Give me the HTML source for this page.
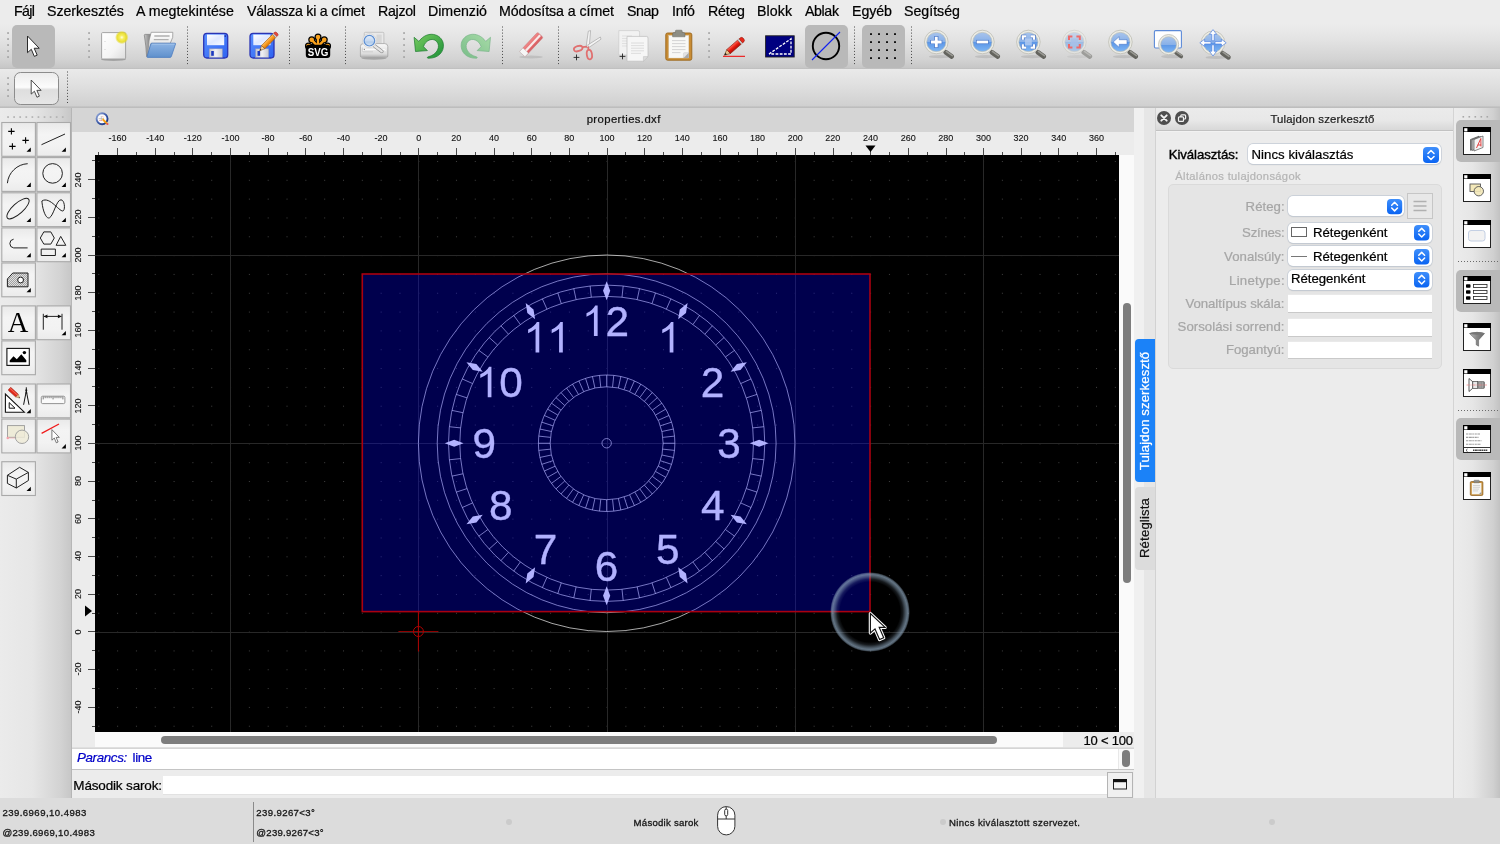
<!DOCTYPE html>
<html lang="hu"><head><meta charset="utf-8"><title>QCAD - properties.dxf</title>
<style>
html,body{margin:0;padding:0;background:#ececec;}
body{width:1500px;height:844px;overflow:hidden;font-family:"Liberation Sans",sans-serif;}
#app{will-change:transform;position:relative;width:1500px;height:844px;overflow:hidden;background:#ececec;}
.t{position:absolute;white-space:pre;font-family:"Liberation Sans",sans-serif;-webkit-text-stroke:0.22px currentColor;}
</style></head><body><div id="app">
<div style="position:absolute;left:0px;top:0px;width:1500px;height:24px;background:#ececec"></div><span class="t" style="left:14.00px;top:1.00px;font-size:14.2px;line-height:20px;color:#000;font-family:'Liberation Sans',sans-serif;letter-spacing:-0.627px;">Fájl</span><span class="t" style="left:47.00px;top:1.00px;font-size:14.2px;line-height:20px;color:#000;font-family:'Liberation Sans',sans-serif;letter-spacing:-0.034px;">Szerkesztés</span><span class="t" style="left:136.00px;top:1.00px;font-size:14.2px;line-height:20px;color:#000;font-family:'Liberation Sans',sans-serif;letter-spacing:0.070px;">A megtekintése</span><span class="t" style="left:247.00px;top:1.00px;font-size:14.2px;line-height:20px;color:#000;font-family:'Liberation Sans',sans-serif;letter-spacing:-0.240px;">Válassza ki a címet</span><span class="t" style="left:378.00px;top:1.00px;font-size:14.2px;line-height:20px;color:#000;font-family:'Liberation Sans',sans-serif;letter-spacing:-0.292px;">Rajzol</span><span class="t" style="left:428.00px;top:1.00px;font-size:14.2px;line-height:20px;color:#000;font-family:'Liberation Sans',sans-serif;letter-spacing:-0.027px;">Dimenzió</span><span class="t" style="left:499.00px;top:1.00px;font-size:14.2px;line-height:20px;color:#000;font-family:'Liberation Sans',sans-serif;letter-spacing:-0.063px;">Módosítsa a címet</span><span class="t" style="left:627.00px;top:1.00px;font-size:14.2px;line-height:20px;color:#000;font-family:'Liberation Sans',sans-serif;letter-spacing:-0.388px;">Snap</span><span class="t" style="left:672.00px;top:1.00px;font-size:14.2px;line-height:20px;color:#000;font-family:'Liberation Sans',sans-serif;letter-spacing:-0.228px;">Infó</span><span class="t" style="left:708.00px;top:1.00px;font-size:14.2px;line-height:20px;color:#000;font-family:'Liberation Sans',sans-serif;letter-spacing:-0.223px;">Réteg</span><span class="t" style="left:757.00px;top:1.00px;font-size:14.2px;line-height:20px;color:#000;font-family:'Liberation Sans',sans-serif;letter-spacing:0.069px;">Blokk</span><span class="t" style="left:805.00px;top:1.00px;font-size:14.2px;line-height:20px;color:#000;font-family:'Liberation Sans',sans-serif;letter-spacing:-0.380px;">Ablak</span><span class="t" style="left:852.00px;top:1.00px;font-size:14.2px;line-height:20px;color:#000;font-family:'Liberation Sans',sans-serif;letter-spacing:-0.066px;">Egyéb</span><span class="t" style="left:904.00px;top:1.00px;font-size:14.2px;line-height:20px;color:#000;font-family:'Liberation Sans',sans-serif;letter-spacing:-0.007px;">Segítség</span>
<div style="position:absolute;left:0px;top:24px;width:1500px;height:45px;background:linear-gradient(#ececec 0%,#e3e3e3 35%,#d3d3d3 78%,#c7c7c7 97%,#bdbdbd 100%)"></div><div style="position:absolute;left:0px;top:69px;width:1500px;height:38px;background:linear-gradient(#eaeaea 0%,#dfdfdf 45%,#cfcfcf 100%)"></div><div style="position:absolute;left:0px;top:106px;width:1500px;height:2px;background:linear-gradient(#c8c8c8,#b9b9b9)"></div><div style="position:absolute;left:12px;top:25px;width:43px;height:43px;background:#b9b9b9;border-radius:5px"></div><div style="position:absolute;left:805px;top:25px;width:43px;height:43px;background:#b9b9b9;border-radius:5px"></div><div style="position:absolute;left:862px;top:25px;width:43px;height:43px;background:#b9b9b9;border-radius:5px"></div><div style="position:absolute;left:14.2px;top:72px;width:44.6px;height:33px;background:linear-gradient(#ececec 0%,#fcfcfc 46%,#dedede 54%,#e6e6e6 100%);border:1.8px solid #8c8c8c;border-radius:6.5px;box-sizing:border-box"></div>
<div style="position:absolute;left:0px;top:108px;width:72px;height:690px;background:linear-gradient(90deg,#ebebeb 0%,#e6e6e6 45%,#d2d2d2 85%,#c6c6c6 100%)"></div><div style="position:absolute;left:70.8px;top:108px;width:1.4px;height:690px;background:#b6b6b6"></div>
<div style="position:absolute;left:72px;top:108px;width:1062px;height:24px;background:#d5d5d5"></div><span class="t" style="left:586.70px;top:111.00px;font-size:11.3px;line-height:16px;color:#111;font-family:'Liberation Sans',sans-serif;letter-spacing:0.395px;">properties.dxf</span><svg style="position:absolute;left:94px;top:111px;overflow:visible;" width="16" height="16" viewBox="0 0 16 16"><defs><linearGradient id="qr" x1="0" y1="0" x2="1" y2="1"><stop offset="0" stop-color="#9cb0dc"/><stop offset="0.5" stop-color="#3c5aa8"/><stop offset="1" stop-color="#16307c"/></linearGradient></defs><circle cx="8.05" cy="7.7" r="5.5" fill="#fafafa" stroke="url(#qr)" stroke-width="1.9"/><path d="M4.6 7.6H10M7.3 5V10" stroke="#a8a8a8" stroke-width="0.6"/><path d="M5 9.4H8M8.6 5.2L9.2 6.4" stroke="#f08080" stroke-width="0.6"/><path d="M8.4 8L13 12.6" stroke="#f8a010" stroke-width="1.9" stroke-linecap="butt"/><path d="M8 7.6L9.2 8L8.4 8.8Z" fill="#f4e0b0"/><circle cx="13.4" cy="13" r="1.1" fill="#e85050"/></svg><div style="position:absolute;left:1119px;top:155px;width:15px;height:577px;background:#fafafa"></div><div style="position:absolute;left:95px;top:732px;width:968px;height:15px;background:#fafafa"></div><div style="position:absolute;left:72px;top:732px;width:23px;height:15px;background:#ececec"></div><div style="position:absolute;left:1063px;top:732px;width:71px;height:15px;background:#ececec"></div><div style="position:absolute;left:1123px;top:303px;width:8px;height:280px;background:#7d7d7d;border-radius:4px"></div><div style="position:absolute;left:161px;top:736px;width:836px;height:8px;background:#7d7d7d;border-radius:4px"></div><span class="t" style="left:1083.50px;top:731.00px;font-size:13px;line-height:19px;color:#000;font-family:'Liberation Sans',sans-serif;letter-spacing:-0.209px;">10 &lt; 100</span><div style="position:absolute;left:72px;top:746.5px;width:1062px;height:3px;background:linear-gradient(#e4e4e4,#c6c6c6)"></div><div style="position:absolute;left:72px;top:749px;width:1062px;height:20px;background:#fff"></div><div style="position:absolute;left:1118px;top:749px;width:16px;height:20px;background:#fafafa;border-left:1px solid #e8e8e8;box-sizing:border-box"></div><div style="position:absolute;left:1122px;top:750px;width:8px;height:17px;background:#7d7d7d;border-radius:4px"></div><div style="position:absolute;left:72px;top:769px;width:1062px;height:1px;background:#c4c4c4"></div><div style="position:absolute;left:72px;top:770px;width:1062px;height:28px;background:#ececec"></div><span class="t" style="left:77.00px;top:748.00px;font-size:13.4px;line-height:19px;color:#0000c8;font-family:'Liberation Sans',sans-serif;letter-spacing:-0.383px;font-style:italic;">Parancs:</span><span class="t" style="left:132.60px;top:748.00px;font-size:13.4px;line-height:19px;color:#0000c8;font-family:'Liberation Sans',sans-serif;letter-spacing:-0.386px;">line</span><span class="t" style="left:73.30px;top:776.00px;font-size:13.5px;line-height:19px;color:#000;font-family:'Liberation Sans',sans-serif;letter-spacing:-0.160px;">Második sarok:</span><div style="position:absolute;left:163px;top:776px;width:945px;height:18px;background:#fff"></div><div style="position:absolute;left:163px;top:794px;width:945px;height:1px;background:#e2e2e2"></div><div style="position:absolute;left:1107px;top:772px;width:26px;height:26px;background:#f0f0f0;border:1px solid #b4b4b4;box-sizing:border-box"></div><svg style="position:absolute;left:1113px;top:779px;overflow:visible;" width="14" height="11" viewBox="0 0 14 11"><rect x="0.5" y="0.5" width="13" height="9.5" fill="#f4f4f4" stroke="#222" stroke-width="1"/><rect x="0" y="0" width="14" height="3.2" fill="#111"/></svg>
<div style="position:absolute;left:1134px;top:108px;width:10px;height:690px;background:#f0f0f0"></div><div style="position:absolute;left:1144px;top:108px;width:11px;height:690px;background:#e6e6e6"></div><div style="position:absolute;left:1155px;top:108px;width:1px;height:690px;background:#d2d2d2"></div><div style="position:absolute;left:1156px;top:108px;width:297px;height:690px;background:#ececec"></div><div style="position:absolute;left:1453px;top:108px;width:1px;height:690px;background:#d4d4d4"></div><div style="position:absolute;left:1454px;top:108px;width:46px;height:690px;background:linear-gradient(90deg,#ececec 0%,#e6e6e6 40%,#d0d0d0 85%,#c2c2c2 100%)"></div>
<div style="position:absolute;left:72px;top:132px;width:1062px;height:23px;background:#ececec"></div><div style="position:absolute;left:72px;top:155px;width:23px;height:577px;background:#ececec"></div><svg style="position:absolute;left:0px;top:0px;overflow:visible;" width="1500" height="844" viewBox="0 0 1500 844"><path d="M98.5 152V155M117.5 148V155M136.5 152V155M155.5 148V155M174.5 152V155M192.5 148V155M211.5 152V155M230.5 148V155M249.5 152V155M268.5 148V155M287.5 152V155M305.5 148V155M324.5 152V155M343.5 148V155M362.5 152V155M381.5 148V155M400.5 152V155M418.5 148V155M437.5 152V155M456.5 148V155M475.5 152V155M494.5 148V155M513.5 152V155M531.5 148V155M550.5 152V155M569.5 148V155M588.5 152V155M607.5 148V155M625.5 152V155M644.5 148V155M663.5 152V155M682.5 148V155M701.5 152V155M720.5 148V155M738.5 152V155M757.5 148V155M776.5 152V155M795.5 148V155M814.5 152V155M833.5 148V155M851.5 152V155M870.5 148V155M889.5 152V155M908.5 148V155M927.5 152V155M946.5 148V155M964.5 152V155M983.5 148V155M1002.5 152V155M1021.5 148V155M1040.5 152V155M1058.5 148V155M1077.5 152V155M1096.5 148V155M1115.5 152V155M92 726.5H95M88 707.5H95M92 688.5H95M88 669.5H95M92 650.5H95M88 631.5H95M92 613.5H95M88 594.5H95M92 575.5H95M88 556.5H95M92 537.5H95M88 518.5H95M92 500.5H95M88 481.5H95M92 462.5H95M88 443.5H95M92 424.5H95M88 405.5H95M92 386.5H95M88 368.5H95M92 349.5H95M88 330.5H95M92 311.5H95M88 292.5H95M92 273.5H95M88 255.5H95M92 236.5H95M88 217.5H95M92 198.5H95M88 179.5H95M92 160.5H95" stroke="#4a4a4a" stroke-width="1" fill="none"/><path d="M865.5 145.5L875.5 145.5L870.5 152Z" fill="#000"/><path d="M85 605.5L85 616.5L92 611Z" fill="#000"/></svg><span class="t" style="left:108.49px;top:131.00px;font-size:9.0px;line-height:14px;color:#111;font-family:'Liberation Sans',sans-serif;letter-spacing:0.000px;-webkit-text-stroke:0.1px #111;">-160</span><span class="t" style="left:146.14px;top:131.00px;font-size:9.0px;line-height:14px;color:#111;font-family:'Liberation Sans',sans-serif;letter-spacing:0.000px;-webkit-text-stroke:0.1px #111;">-140</span><span class="t" style="left:183.79px;top:131.00px;font-size:9.0px;line-height:14px;color:#111;font-family:'Liberation Sans',sans-serif;letter-spacing:0.000px;-webkit-text-stroke:0.1px #111;">-120</span><span class="t" style="left:221.44px;top:131.00px;font-size:9.0px;line-height:14px;color:#111;font-family:'Liberation Sans',sans-serif;letter-spacing:0.000px;-webkit-text-stroke:0.1px #111;">-100</span><span class="t" style="left:261.60px;top:131.00px;font-size:9.0px;line-height:14px;color:#111;font-family:'Liberation Sans',sans-serif;letter-spacing:0.000px;-webkit-text-stroke:0.1px #111;">-80</span><span class="t" style="left:299.25px;top:131.00px;font-size:9.0px;line-height:14px;color:#111;font-family:'Liberation Sans',sans-serif;letter-spacing:0.000px;-webkit-text-stroke:0.1px #111;">-60</span><span class="t" style="left:336.90px;top:131.00px;font-size:9.0px;line-height:14px;color:#111;font-family:'Liberation Sans',sans-serif;letter-spacing:0.000px;-webkit-text-stroke:0.1px #111;">-40</span><span class="t" style="left:374.55px;top:131.00px;font-size:9.0px;line-height:14px;color:#111;font-family:'Liberation Sans',sans-serif;letter-spacing:0.000px;-webkit-text-stroke:0.1px #111;">-20</span><span class="t" style="left:416.20px;top:131.00px;font-size:9.0px;line-height:14px;color:#111;font-family:'Liberation Sans',sans-serif;-webkit-text-stroke:0.1px #111;">0</span><span class="t" style="left:451.34px;top:131.00px;font-size:9.0px;line-height:14px;color:#111;font-family:'Liberation Sans',sans-serif;letter-spacing:0.000px;-webkit-text-stroke:0.1px #111;">20</span><span class="t" style="left:488.99px;top:131.00px;font-size:9.0px;line-height:14px;color:#111;font-family:'Liberation Sans',sans-serif;letter-spacing:0.000px;-webkit-text-stroke:0.1px #111;">40</span><span class="t" style="left:526.64px;top:131.00px;font-size:9.0px;line-height:14px;color:#111;font-family:'Liberation Sans',sans-serif;letter-spacing:0.000px;-webkit-text-stroke:0.1px #111;">60</span><span class="t" style="left:564.29px;top:131.00px;font-size:9.0px;line-height:14px;color:#111;font-family:'Liberation Sans',sans-serif;letter-spacing:0.000px;-webkit-text-stroke:0.1px #111;">80</span><span class="t" style="left:599.44px;top:131.00px;font-size:9.0px;line-height:14px;color:#111;font-family:'Liberation Sans',sans-serif;letter-spacing:0.000px;-webkit-text-stroke:0.1px #111;">100</span><span class="t" style="left:637.09px;top:131.00px;font-size:9.0px;line-height:14px;color:#111;font-family:'Liberation Sans',sans-serif;letter-spacing:0.000px;-webkit-text-stroke:0.1px #111;">120</span><span class="t" style="left:674.74px;top:131.00px;font-size:9.0px;line-height:14px;color:#111;font-family:'Liberation Sans',sans-serif;letter-spacing:0.000px;-webkit-text-stroke:0.1px #111;">140</span><span class="t" style="left:712.39px;top:131.00px;font-size:9.0px;line-height:14px;color:#111;font-family:'Liberation Sans',sans-serif;letter-spacing:0.000px;-webkit-text-stroke:0.1px #111;">160</span><span class="t" style="left:750.04px;top:131.00px;font-size:9.0px;line-height:14px;color:#111;font-family:'Liberation Sans',sans-serif;letter-spacing:0.000px;-webkit-text-stroke:0.1px #111;">180</span><span class="t" style="left:787.69px;top:131.00px;font-size:9.0px;line-height:14px;color:#111;font-family:'Liberation Sans',sans-serif;letter-spacing:0.000px;-webkit-text-stroke:0.1px #111;">200</span><span class="t" style="left:825.34px;top:131.00px;font-size:9.0px;line-height:14px;color:#111;font-family:'Liberation Sans',sans-serif;letter-spacing:0.000px;-webkit-text-stroke:0.1px #111;">220</span><span class="t" style="left:862.99px;top:131.00px;font-size:9.0px;line-height:14px;color:#111;font-family:'Liberation Sans',sans-serif;letter-spacing:0.000px;-webkit-text-stroke:0.1px #111;">240</span><span class="t" style="left:900.64px;top:131.00px;font-size:9.0px;line-height:14px;color:#111;font-family:'Liberation Sans',sans-serif;letter-spacing:0.000px;-webkit-text-stroke:0.1px #111;">260</span><span class="t" style="left:938.29px;top:131.00px;font-size:9.0px;line-height:14px;color:#111;font-family:'Liberation Sans',sans-serif;letter-spacing:0.000px;-webkit-text-stroke:0.1px #111;">280</span><span class="t" style="left:975.94px;top:131.00px;font-size:9.0px;line-height:14px;color:#111;font-family:'Liberation Sans',sans-serif;letter-spacing:0.000px;-webkit-text-stroke:0.1px #111;">300</span><span class="t" style="left:1013.59px;top:131.00px;font-size:9.0px;line-height:14px;color:#111;font-family:'Liberation Sans',sans-serif;letter-spacing:0.000px;-webkit-text-stroke:0.1px #111;">320</span><span class="t" style="left:1051.24px;top:131.00px;font-size:9.0px;line-height:14px;color:#111;font-family:'Liberation Sans',sans-serif;letter-spacing:0.000px;-webkit-text-stroke:0.1px #111;">340</span><span class="t" style="left:1088.89px;top:131.00px;font-size:9.0px;line-height:14px;color:#111;font-family:'Liberation Sans',sans-serif;letter-spacing:0.000px;-webkit-text-stroke:0.1px #111;">360</span><span class="t" style="left:73.4px;top:706.80px;font-size:9.0px;line-height:10px;color:#111;-webkit-text-stroke:0.1px #111;transform-origin:0 0;transform:translate(0px,6.50px) rotate(-90deg);">-40</span><span class="t" style="left:73.4px;top:669.15px;font-size:9.0px;line-height:10px;color:#111;-webkit-text-stroke:0.1px #111;transform-origin:0 0;transform:translate(0px,6.50px) rotate(-90deg);">-20</span><span class="t" style="left:73.4px;top:631.50px;font-size:9.0px;line-height:10px;color:#111;-webkit-text-stroke:0.1px #111;transform-origin:0 0;transform:translate(0px,2.50px) rotate(-90deg);">0</span><span class="t" style="left:73.4px;top:593.85px;font-size:9.0px;line-height:10px;color:#111;-webkit-text-stroke:0.1px #111;transform-origin:0 0;transform:translate(0px,5.01px) rotate(-90deg);">20</span><span class="t" style="left:73.4px;top:556.20px;font-size:9.0px;line-height:10px;color:#111;-webkit-text-stroke:0.1px #111;transform-origin:0 0;transform:translate(0px,5.01px) rotate(-90deg);">40</span><span class="t" style="left:73.4px;top:518.55px;font-size:9.0px;line-height:10px;color:#111;-webkit-text-stroke:0.1px #111;transform-origin:0 0;transform:translate(0px,5.01px) rotate(-90deg);">60</span><span class="t" style="left:73.4px;top:480.90px;font-size:9.0px;line-height:10px;color:#111;-webkit-text-stroke:0.1px #111;transform-origin:0 0;transform:translate(0px,5.01px) rotate(-90deg);">80</span><span class="t" style="left:73.4px;top:443.25px;font-size:9.0px;line-height:10px;color:#111;-webkit-text-stroke:0.1px #111;transform-origin:0 0;transform:translate(0px,7.51px) rotate(-90deg);">100</span><span class="t" style="left:73.4px;top:405.60px;font-size:9.0px;line-height:10px;color:#111;-webkit-text-stroke:0.1px #111;transform-origin:0 0;transform:translate(0px,7.51px) rotate(-90deg);">120</span><span class="t" style="left:73.4px;top:367.95px;font-size:9.0px;line-height:10px;color:#111;-webkit-text-stroke:0.1px #111;transform-origin:0 0;transform:translate(0px,7.51px) rotate(-90deg);">140</span><span class="t" style="left:73.4px;top:330.30px;font-size:9.0px;line-height:10px;color:#111;-webkit-text-stroke:0.1px #111;transform-origin:0 0;transform:translate(0px,7.51px) rotate(-90deg);">160</span><span class="t" style="left:73.4px;top:292.65px;font-size:9.0px;line-height:10px;color:#111;-webkit-text-stroke:0.1px #111;transform-origin:0 0;transform:translate(0px,7.51px) rotate(-90deg);">180</span><span class="t" style="left:73.4px;top:255.00px;font-size:9.0px;line-height:10px;color:#111;-webkit-text-stroke:0.1px #111;transform-origin:0 0;transform:translate(0px,7.51px) rotate(-90deg);">200</span><span class="t" style="left:73.4px;top:217.35px;font-size:9.0px;line-height:10px;color:#111;-webkit-text-stroke:0.1px #111;transform-origin:0 0;transform:translate(0px,7.51px) rotate(-90deg);">220</span><span class="t" style="left:73.4px;top:179.70px;font-size:9.0px;line-height:10px;color:#111;-webkit-text-stroke:0.1px #111;transform-origin:0 0;transform:translate(0px,7.51px) rotate(-90deg);">240</span>
<svg style="position:absolute;left:0;top:0" width="1500" height="844" viewBox="0 0 1500 844"><rect x="95" y="155" width="1024" height="577" fill="#000"/><defs><pattern id="gd" x="418.300" y="631.600" width="18.8250" height="18.8250" patternUnits="userSpaceOnUse"><rect x="0" y="0" width="1" height="1" fill="#404040"/></pattern><clipPath id="cclip"><rect x="95" y="155" width="1024" height="577"/></clipPath><radialGradient id="ring" cx="50%" cy="50%" r="50%"><stop offset="0.75" stop-color="#8aa2b8" stop-opacity="0"/><stop offset="0.82" stop-color="#8aa2b8" stop-opacity="0.16"/><stop offset="0.885" stop-color="#8aa2b8" stop-opacity="0.5"/><stop offset="0.935" stop-color="#8ea6bc" stop-opacity="0.7"/><stop offset="0.965" stop-color="#8ea6bc" stop-opacity="0.55"/><stop offset="0.99" stop-color="#8aa2b8" stop-opacity="0.15"/><stop offset="1" stop-color="#8aa2b8" stop-opacity="0"/></radialGradient></defs><g clip-path="url(#cclip)"><rect x="95" y="155" width="1024" height="577" fill="url(#gd)"/><line x1="230.5" y1="155" x2="230.5" y2="732" stroke="#282828" stroke-width="1"/><line x1="418.5" y1="155" x2="418.5" y2="732" stroke="#282828" stroke-width="1"/><line x1="607.5" y1="155" x2="607.5" y2="732" stroke="#282828" stroke-width="1"/><line x1="795.5" y1="155" x2="795.5" y2="732" stroke="#282828" stroke-width="1"/><line x1="983.5" y1="155" x2="983.5" y2="732" stroke="#282828" stroke-width="1"/><line x1="95" y1="632.5" x2="1119" y2="632.5" stroke="#282828" stroke-width="1"/><line x1="95" y1="443.5" x2="1119" y2="443.5" stroke="#282828" stroke-width="1"/><line x1="95" y1="255.5" x2="1119" y2="255.5" stroke="#282828" stroke-width="1"/><g fill="none" stroke="#fff" stroke-opacity="0.74" stroke-width="0.9"><circle cx="606.65" cy="443.25" r="188.25"/><circle cx="606.65" cy="443.25" r="169.43"/><circle cx="606.65" cy="443.25" r="158.13"/><circle cx="606.65" cy="443.25" r="146.84"/><circle cx="606.65" cy="443.25" r="68.24"/><circle cx="606.65" cy="443.25" r="56.48"/><circle cx="606.65" cy="443.25" r="4.71"/><path d="M606.65 386.77L606.65 375.01M622.00 297.22L623.18 285.99M612.55 387.08L613.78 375.38M637.18 299.62L639.53 288.58M618.39 388.01L620.84 376.50M652.02 303.60L655.51 292.86M624.10 389.54L627.74 378.35M666.37 309.11L670.97 298.79M629.62 391.66L634.41 380.91M634.89 394.34L640.77 384.15M692.96 324.46L699.60 315.32M639.85 397.56L646.76 388.04M704.90 334.13L712.46 325.74M644.44 401.28L652.31 392.54M715.77 345.00L724.16 337.44M648.62 405.46L657.36 397.59M725.44 356.94L734.58 350.30M652.34 410.05L661.86 403.14M655.56 415.01L665.75 409.13M740.79 383.53L751.11 378.93M658.24 420.28L668.99 415.49M746.30 397.88L757.04 394.39M660.36 425.80L671.55 422.16M750.28 412.72L761.32 410.37M661.89 431.51L673.40 429.06M752.68 427.90L763.91 426.72M662.82 437.35L674.52 436.12M663.12 443.25L674.89 443.25M752.68 458.60L763.91 459.78M662.82 449.15L674.52 450.38M750.28 473.78L761.32 476.13M661.89 454.99L673.40 457.44M746.30 488.62L757.04 492.11M660.36 460.70L671.55 464.34M740.79 502.97L751.11 507.57M658.24 466.22L668.99 471.01M655.56 471.49L665.75 477.37M725.44 529.56L734.58 536.20M652.34 476.45L661.86 483.36M715.77 541.50L724.16 549.06M648.62 481.04L657.36 488.91M704.90 552.37L712.46 560.76M644.44 485.22L652.31 493.96M692.96 562.04L699.60 571.18M639.85 488.94L646.76 498.46M634.89 492.16L640.77 502.35M666.37 577.39L670.97 587.71M629.62 494.84L634.41 505.59M652.02 582.90L655.51 593.64M624.10 496.96L627.74 508.15M637.18 586.88L639.53 597.92M618.39 498.49L620.84 510.00M622.00 589.28L623.18 600.51M612.55 499.42L613.78 511.12M606.65 499.73L606.65 511.49M591.30 589.28L590.12 600.51M600.75 499.42L599.52 511.12M576.12 586.88L573.77 597.92M594.91 498.49L592.46 510.00M561.28 582.90L557.79 593.64M589.20 496.96L585.56 508.15M546.93 577.39L542.33 587.71M583.68 494.84L578.89 505.59M578.41 492.16L572.53 502.35M520.34 562.04L513.70 571.18M573.45 488.94L566.54 498.46M508.40 552.37L500.84 560.76M568.86 485.22L560.99 493.96M497.53 541.50L489.14 549.06M564.68 481.04L555.94 488.91M487.86 529.56L478.72 536.20M560.96 476.45L551.44 483.36M557.74 471.49L547.55 477.37M472.51 502.97L462.19 507.57M555.06 466.22L544.31 471.01M467.00 488.62L456.26 492.11M552.94 460.70L541.75 464.34M463.02 473.78L451.98 476.13M551.41 454.99L539.90 457.44M460.62 458.60L449.39 459.78M550.48 449.15L538.78 450.38M550.17 443.25L538.41 443.25M460.62 427.90L449.39 426.72M550.48 437.35L538.78 436.12M463.02 412.72L451.98 410.37M551.41 431.51L539.90 429.06M467.00 397.88L456.26 394.39M552.94 425.80L541.75 422.16M472.51 383.53L462.19 378.93M555.06 420.28L544.31 415.49M557.74 415.01L547.55 409.13M487.86 356.94L478.72 350.30M560.96 410.05L551.44 403.14M497.53 345.00L489.14 337.44M564.68 405.46L555.94 397.59M508.40 334.13L500.84 325.74M568.86 401.28L560.99 392.54M520.34 324.46L513.70 315.32M573.45 397.56L566.54 388.04M578.41 394.34L572.53 384.15M546.93 309.11L542.33 298.79M583.68 391.66L578.89 380.91M561.28 303.60L557.79 292.86M589.20 389.54L585.56 378.35M576.12 299.62L573.77 288.58M594.91 388.01L592.46 376.50M591.30 297.22L590.12 285.99M600.75 387.08L599.52 375.38"/></g><g fill="#fff"><path transform="rotate(0 606.65 443.25)" d="M606.65 281.36L610.23 290.77L606.65 300.18L603.07 290.77Z"/><path transform="rotate(30 606.65 443.25)" d="M606.65 281.36L610.23 290.77L606.65 300.18L603.07 290.77Z"/><path transform="rotate(60 606.65 443.25)" d="M606.65 281.36L610.23 290.77L606.65 300.18L603.07 290.77Z"/><path transform="rotate(90 606.65 443.25)" d="M606.65 281.36L610.23 290.77L606.65 300.18L603.07 290.77Z"/><path transform="rotate(120 606.65 443.25)" d="M606.65 281.36L610.23 290.77L606.65 300.18L603.07 290.77Z"/><path transform="rotate(150 606.65 443.25)" d="M606.65 281.36L610.23 290.77L606.65 300.18L603.07 290.77Z"/><path transform="rotate(180 606.65 443.25)" d="M606.65 281.36L610.23 290.77L606.65 300.18L603.07 290.77Z"/><path transform="rotate(210 606.65 443.25)" d="M606.65 281.36L610.23 290.77L606.65 300.18L603.07 290.77Z"/><path transform="rotate(240 606.65 443.25)" d="M606.65 281.36L610.23 290.77L606.65 300.18L603.07 290.77Z"/><path transform="rotate(270 606.65 443.25)" d="M606.65 281.36L610.23 290.77L606.65 300.18L603.07 290.77Z"/><path transform="rotate(300 606.65 443.25)" d="M606.65 281.36L610.23 290.77L606.65 300.18L603.07 290.77Z"/><path transform="rotate(330 606.65 443.25)" d="M606.65 281.36L610.23 290.77L606.65 300.18L603.07 290.77Z"/></g><g fill="#fff" stroke="#fff" stroke-width="0.35" font-family="Liberation Sans, sans-serif" font-size="43.4"><path transform="translate(657.65,352.38) scale(0.02065)" d="M763 0H583V-1147Q518 -1085 412.5 -1023Q307 -961 223 -930V-1104Q374 -1175 487 -1276Q600 -1377 647 -1472H763Z"/><text transform="translate(700.85,397.17) scale(0.975,1)" x="0" y="0">2</text><text transform="translate(717.37,458.35) scale(0.975,1)" x="0" y="0">3</text><text transform="translate(700.99,519.53) scale(0.975,1)" x="0" y="0">4</text><text transform="translate(656.11,564.32) scale(0.975,1)" x="0" y="0">5</text><text transform="translate(594.74,580.71) scale(0.975,1)" x="0" y="0">6</text><text transform="translate(533.68,564.32) scale(0.975,1)" x="0" y="0">7</text><text transform="translate(488.91,519.53) scale(0.975,1)" x="0" y="0">8</text><text transform="translate(472.53,458.35) scale(0.975,1)" x="0" y="0">9</text><path transform="translate(475.68,397.17) scale(0.02065)" d="M763 0H583V-1147Q518 -1085 412.5 -1023Q307 -961 223 -930V-1104Q374 -1175 487 -1276Q600 -1377 647 -1472H763Z"/><text transform="translate(499.20,397.17) scale(0.975,1)" x="0" y="0">0</text><path transform="translate(523.52,352.38) scale(0.02065)" d="M763 0H583V-1147Q518 -1085 412.5 -1023Q307 -961 223 -930V-1104Q374 -1175 487 -1276Q600 -1377 647 -1472H763Z"/><path transform="translate(547.05,352.38) scale(0.02065)" d="M763 0H583V-1147Q518 -1085 412.5 -1023Q307 -961 223 -930V-1104Q374 -1175 487 -1276Q600 -1377 647 -1472H763Z"/><path transform="translate(581.88,335.99) scale(0.02065)" d="M763 0H583V-1147Q518 -1085 412.5 -1023Q307 -961 223 -930V-1104Q374 -1175 487 -1276Q600 -1377 647 -1472H763Z"/><text transform="translate(605.41,335.99) scale(0.975,1)" x="0" y="0">2</text></g><g stroke="#b00000" fill="none" stroke-width="1"><line x1="398.4" y1="631.5" x2="438.4" y2="631.5" stroke-opacity="0.8"/><line x1="418.4" y1="611.5" x2="418.4" y2="651.5"/><circle cx="418.4" cy="631.5" r="5"/></g><rect x="362.3" y="274.0" width="507.7" height="337.6" fill="rgba(0,0,255,0.30)" stroke="#aa0010" stroke-width="1.6"/><circle cx="870" cy="612" r="40" fill="url(#ring)"/><g transform="translate(869.3,611.2)"><path d="M1.1 2.4 L1.1 21.8 L5.7 17.7 L10.3 28.4 L14.4 26.6 L9.9 16.2 L15.8 16.2 Z" fill="#fff" stroke="#fff" stroke-width="3.3" stroke-linejoin="round"/><path d="M1.1 2.4 L1.1 21.8 L5.7 17.7 L10.3 28.4 L14.4 26.6 L9.9 16.2 L15.8 16.2 Z" fill="#fff" stroke="#101010" stroke-width="1.15" stroke-linejoin="miter"/></g></g></svg>
<div style="position:absolute;left:0px;top:798px;width:1500px;height:46px;background:#dcdcdc"></div><span class="t" style="left:2.40px;top:805.00px;font-size:9.6px;line-height:15px;color:#161616;font-family:'Liberation Sans',sans-serif;letter-spacing:0.439px;-webkit-text-stroke:0.3px currentColor;">239.6969,10.4983</span><span class="t" style="left:2.40px;top:825.00px;font-size:9.6px;line-height:15px;color:#161616;font-family:'Liberation Sans',sans-serif;letter-spacing:0.328px;-webkit-text-stroke:0.3px currentColor;">@239.6969,10.4983</span><div style="position:absolute;left:253px;top:802px;width:1px;height:40px;background:#8a8a8a"></div><span class="t" style="left:256.30px;top:805.00px;font-size:9.6px;line-height:15px;color:#161616;font-family:'Liberation Sans',sans-serif;letter-spacing:0.377px;-webkit-text-stroke:0.3px currentColor;">239.9267&lt;3°</span><span class="t" style="left:256.30px;top:825.00px;font-size:9.6px;line-height:15px;color:#161616;font-family:'Liberation Sans',sans-serif;letter-spacing:0.257px;-webkit-text-stroke:0.3px currentColor;">@239.9267&lt;3°</span><span class="t" style="left:633.60px;top:815.00px;font-size:9.6px;line-height:15px;color:#161616;font-family:'Liberation Sans',sans-serif;letter-spacing:0.243px;-webkit-text-stroke:0.3px currentColor;">Második sarok</span><span class="t" style="left:949.00px;top:815.00px;font-size:9.6px;line-height:15px;color:#161616;font-family:'Liberation Sans',sans-serif;letter-spacing:0.372px;-webkit-text-stroke:0.3px currentColor;">Nincs kiválasztott szervezet.</span><div style="position:absolute;left:506px;top:819px;width:6px;height:6px;background:#cbcbcb;border-radius:3px"></div><div style="position:absolute;left:940px;top:819px;width:6px;height:6px;background:#cbcbcb;border-radius:3px"></div><div style="position:absolute;left:1269px;top:819px;width:6px;height:6px;background:#cbcbcb;border-radius:3px"></div><svg style="position:absolute;left:717px;top:806px;overflow:visible;" width="19" height="30" viewBox="0 0 19 30"><rect x="0.6" y="0.6" width="17.3" height="28.3" rx="8.6" ry="8.6" fill="#fff" stroke="#333" stroke-width="1"/><line x1="0.6" y1="13" x2="17.9" y2="13" stroke="#333" stroke-width="1"/><line x1="9.2" y1="0.6" x2="9.2" y2="3.2" stroke="#333" stroke-width="1"/><line x1="9.2" y1="9.8" x2="9.2" y2="13" stroke="#333" stroke-width="1"/><rect x="7.7" y="3.2" width="3" height="6.6" rx="1.3" fill="#fff" stroke="#333" stroke-width="1"/></svg>
<svg style="position:absolute;left:0px;top:0px;overflow:visible;" width="1500" height="844" viewBox="0 0 1500 844"><defs>
<linearGradient id="pg" x1="0" y1="0" x2="1" y2="1"><stop offset="0" stop-color="#ffffff"/><stop offset="0.6" stop-color="#f4f4f4"/><stop offset="1" stop-color="#dcdcdc"/></linearGradient>
<radialGradient id="yg" cx="50%" cy="50%" r="50%"><stop offset="0" stop-color="#ffffe0"/><stop offset="0.3" stop-color="#f6ee60"/><stop offset="0.7" stop-color="#e8dc20" stop-opacity="0.9"/><stop offset="1" stop-color="#e0d420" stop-opacity="0"/></radialGradient>
<linearGradient id="fb" x1="0" y1="0" x2="0" y2="1"><stop offset="0" stop-color="#8db4e4"/><stop offset="1" stop-color="#5f90cc"/></linearGradient>
<linearGradient id="fl" x1="0" y1="0" x2="1" y2="1"><stop offset="0" stop-color="#ffffff"/><stop offset="0.5" stop-color="#dfe8ff"/><stop offset="1" stop-color="#f8faff"/></linearGradient>
<linearGradient id="fd" x1="0" y1="0" x2="1" y2="1"><stop offset="0" stop-color="#5a90ff"/><stop offset="1" stop-color="#2e62f0"/></linearGradient>
<linearGradient id="sh" x1="0" y1="0" x2="1" y2="0"><stop offset="0" stop-color="#c4c4cc"/><stop offset="0.5" stop-color="#f0f0f4"/><stop offset="1" stop-color="#c8c8d0"/></linearGradient>
<linearGradient id="gr" x1="0" y1="0" x2="1" y2="1"><stop offset="0" stop-color="#78cc60"/><stop offset="1" stop-color="#1c9038"/></linearGradient>
<linearGradient id="gr2" x1="0" y1="0" x2="1" y2="1"><stop offset="0" stop-color="#a8dca8"/><stop offset="1" stop-color="#78bc88"/></linearGradient>
<linearGradient id="pr" x1="0" y1="0" x2="0" y2="1"><stop offset="0" stop-color="#fafafa"/><stop offset="0.75" stop-color="#dcdcdc"/><stop offset="1" stop-color="#b0b0b0"/></linearGradient>
<linearGradient id="lens" x1="0" y1="0" x2="0" y2="1"><stop offset="0" stop-color="#a8c4ec"/><stop offset="0.5" stop-color="#88b0e8"/><stop offset="0.51" stop-color="#5c96e6"/><stop offset="1" stop-color="#7eb6f4"/></linearGradient>
<radialGradient id="lens2" cx="50%" cy="35%" r="65%"><stop offset="0" stop-color="#d8e4f6"/><stop offset="0.55" stop-color="#b8cdee"/><stop offset="1" stop-color="#a0bae4"/></radialGradient>
<linearGradient id="pc" x1="0" y1="0" x2="0" y2="1"><stop offset="0" stop-color="#ff6a5a"/><stop offset="0.5" stop-color="#e81c10"/><stop offset="1" stop-color="#b00c04"/></linearGradient>
<linearGradient id="po" x1="0" y1="0" x2="0" y2="1"><stop offset="0" stop-color="#ffc060"/><stop offset="0.5" stop-color="#f8981c"/><stop offset="1" stop-color="#d87808"/></linearGradient>
<linearGradient id="er" x1="0" y1="0" x2="0" y2="1"><stop offset="0" stop-color="#f08888"/><stop offset="1" stop-color="#d85c60"/></linearGradient>
</defs><rect x="7.2" y="32.2" width="1.7" height="1.7" fill="#a2a2a2"/><rect x="7.2" y="38.2" width="1.7" height="1.7" fill="#a2a2a2"/><rect x="7.2" y="44.2" width="1.7" height="1.7" fill="#a2a2a2"/><rect x="7.2" y="50.2" width="1.7" height="1.7" fill="#a2a2a2"/><rect x="7.2" y="56.2" width="1.7" height="1.7" fill="#a2a2a2"/><rect x="88.2" y="32.2" width="1.7" height="1.7" fill="#a2a2a2"/><rect x="88.2" y="38.2" width="1.7" height="1.7" fill="#a2a2a2"/><rect x="88.2" y="44.2" width="1.7" height="1.7" fill="#a2a2a2"/><rect x="88.2" y="50.2" width="1.7" height="1.7" fill="#a2a2a2"/><rect x="88.2" y="56.2" width="1.7" height="1.7" fill="#a2a2a2"/><rect x="403.2" y="32.2" width="1.7" height="1.7" fill="#a2a2a2"/><rect x="403.2" y="38.2" width="1.7" height="1.7" fill="#a2a2a2"/><rect x="403.2" y="44.2" width="1.7" height="1.7" fill="#a2a2a2"/><rect x="403.2" y="50.2" width="1.7" height="1.7" fill="#a2a2a2"/><rect x="403.2" y="56.2" width="1.7" height="1.7" fill="#a2a2a2"/><rect x="708.2" y="32.2" width="1.7" height="1.7" fill="#a2a2a2"/><rect x="708.2" y="38.2" width="1.7" height="1.7" fill="#a2a2a2"/><rect x="708.2" y="44.2" width="1.7" height="1.7" fill="#a2a2a2"/><rect x="708.2" y="50.2" width="1.7" height="1.7" fill="#a2a2a2"/><rect x="708.2" y="56.2" width="1.7" height="1.7" fill="#a2a2a2"/><line x1="187.5" y1="26.5" x2="187.5" y2="66" stroke="#484848" stroke-width="1" stroke-dasharray="1 2.05"/><line x1="289.5" y1="26.5" x2="289.5" y2="66" stroke="#484848" stroke-width="1" stroke-dasharray="1 2.05"/><line x1="345.5" y1="26.5" x2="345.5" y2="66" stroke="#484848" stroke-width="1" stroke-dasharray="1 2.05"/><line x1="502.5" y1="26.5" x2="502.5" y2="66" stroke="#484848" stroke-width="1" stroke-dasharray="1 2.05"/><line x1="558.5" y1="26.5" x2="558.5" y2="66" stroke="#484848" stroke-width="1" stroke-dasharray="1 2.05"/><line x1="854.5" y1="26.5" x2="854.5" y2="66" stroke="#484848" stroke-width="1" stroke-dasharray="1 2.05"/><line x1="911.5" y1="26.5" x2="911.5" y2="66" stroke="#484848" stroke-width="1" stroke-dasharray="1 2.05"/><rect x="7.2" y="77.2" width="1.7" height="1.7" fill="#a2a2a2"/><rect x="7.2" y="83.2" width="1.7" height="1.7" fill="#a2a2a2"/><rect x="7.2" y="89.2" width="1.7" height="1.7" fill="#a2a2a2"/><rect x="7.2" y="95.2" width="1.7" height="1.7" fill="#a2a2a2"/><line x1="67.5" y1="71.5" x2="67.5" y2="105" stroke="#484848" stroke-width="1" stroke-dasharray="1 2.05"/><path transform="translate(27.5,36)" d="M0 0V16.69L3.81 13.29L6.80 20.39L9.68 19.16L6.70 12.26H11.74Z" fill="#fff" stroke="#2a2a2a" stroke-width="1.0" stroke-linejoin="round"/><path transform="translate(31.2,80)" d="M0 0V14.09L3.22 11.22L5.74 17.23L8.18 16.18L5.66 10.35H9.92Z" fill="#fff" stroke="#3a3a3a" stroke-width="0.9" stroke-linejoin="round"/><ellipse cx="113.5" cy="59.5" rx="12.5" ry="1.4" fill="#000" opacity="0.22"/><rect x="101.6" y="32.6" width="24" height="26.4" rx="1" fill="url(#pg)" stroke="#9c9c9c" stroke-width="0.9"/><path d="M104.5 41.5h1M104.5 49.5h1" stroke="#c8c8c8" stroke-width="0.8"/><circle cx="121.8" cy="37.4" r="6.8" fill="url(#yg)"/><defs><linearGradient id="pap" x1="0" y1="0" x2="0" y2="1"><stop offset="0" stop-color="#ffffff"/><stop offset="0.35" stop-color="#f0f0f0"/><stop offset="1" stop-color="#b4b4b4"/></linearGradient><linearGradient id="bk" x1="0" y1="0" x2="1" y2="0"><stop offset="0" stop-color="#c8c8c8"/><stop offset="0.5" stop-color="#9a9a9a"/><stop offset="1" stop-color="#7c7c7c"/></linearGradient></defs><path d="M144.3 35.2Q144.3 34.4 145.2 34.4H151.6L150.8 38L148.6 56.6L146.6 56.6Q146.2 46 144.3 35.2Z" fill="url(#bk)" stroke="#7a7a7a" stroke-width="0.7"/><path d="M151.2 32.3H172.8L172.7 37.4L170.2 43.4H151L147.4 56L149.2 40Z" fill="url(#pap)" stroke="#8a8a8a" stroke-width="0.7" stroke-linejoin="round"/><path d="M154.3 36H169.6M153.8 39.7H168.6" stroke="#b0b0b0" stroke-width="1.3"/><path d="M151.9 43.2H175Q175.8 43.2 175.5 44L171.3 56.6Q171 57.4 170.2 57.4H147.6Q146.8 57.4 147.1 56.6L150.8 44Q151.1 43.2 151.9 43.2Z" fill="url(#fb)" stroke="#4c7cc0" stroke-width="0.8" stroke-linejoin="round"/><path d="M152 44.2H174.6" stroke="#b4d0f0" stroke-width="0.8" opacity="0.8"/><g transform="translate(203,0)"><rect x="0.7" y="33.4" width="24" height="24.6" rx="3.2" fill="url(#fd)" stroke="#2a34b4" stroke-width="1.3"/><rect x="4" y="34.6" width="17.2" height="10.6" fill="url(#fl)"/><rect x="21.6" y="35.3" width="1.3" height="1.6" fill="#1c2a9c"/><rect x="6.2" y="48.8" width="13.2" height="8.6" fill="url(#sh)" stroke="#8c94c0" stroke-width="0.5"/><rect x="8.2" y="51" width="2.6" height="4.8" fill="#1c38c0"/></g><g transform="translate(249.3,0)"><rect x="0.7" y="33.4" width="24" height="24.6" rx="3.2" fill="url(#fd)" stroke="#2a34b4" stroke-width="1.3"/><rect x="4" y="34.6" width="17.2" height="10.6" fill="url(#fl)"/><rect x="21.6" y="35.3" width="1.3" height="1.6" fill="#1c2a9c"/><rect x="6.2" y="48.8" width="13.2" height="8.6" fill="url(#sh)" stroke="#8c94c0" stroke-width="0.5"/><rect x="8.2" y="51" width="2.6" height="4.8" fill="#1c38c0"/></g><g transform="translate(259.6,50.8) rotate(-45.5)"><path d="M0 0L5.2 -2.3V2.3Z" fill="#f0d0a0" stroke="#7a5020" stroke-width="0.5"/><path d="M0 0L1.9 -0.85V0.85Z" fill="#222"/><rect x="5.2" y="-2.3" width="15.6" height="4.6" fill="url(#po)" stroke="#a85c08" stroke-width="0.6"/><rect x="20.8" y="-2.3" width="1.6" height="4.6" fill="#d8d8d8" stroke="#888" stroke-width="0.4"/><path d="M22.4 -2.3H23.6Q25 -2.3 25 0Q25 2.3 23.6 2.3H22.4Z" fill="#e8483c" stroke="#a02018" stroke-width="0.5"/></g><line x1="316.00" y1="46.46" x2="308.42" y2="45.93" stroke="#000" stroke-width="4.6" stroke-linecap="round"/><circle cx="308.42" cy="45.93" r="3.5" fill="#000"/><line x1="316.64" y1="45.14" x2="311.73" y2="39.87" stroke="#000" stroke-width="4.6" stroke-linecap="round"/><circle cx="311.73" cy="39.87" r="3.5" fill="#000"/><line x1="318.00" y1="44.60" x2="318.00" y2="37.00" stroke="#000" stroke-width="4.6" stroke-linecap="round"/><circle cx="318.00" cy="37.00" r="3.5" fill="#000"/><line x1="319.36" y1="45.14" x2="324.27" y2="39.87" stroke="#000" stroke-width="4.6" stroke-linecap="round"/><circle cx="324.27" cy="39.87" r="3.5" fill="#000"/><line x1="320.00" y1="46.46" x2="327.58" y2="45.93" stroke="#000" stroke-width="4.6" stroke-linecap="round"/><circle cx="327.58" cy="45.93" r="3.5" fill="#000"/><line x1="316.00" y1="46.46" x2="308.42" y2="45.93" stroke="#f9a21e" stroke-width="2.3" stroke-linecap="round"/><circle cx="308.42" cy="45.93" r="2.3" fill="#f9a21e"/><line x1="316.64" y1="45.14" x2="311.73" y2="39.87" stroke="#f9a21e" stroke-width="2.3" stroke-linecap="round"/><circle cx="311.73" cy="39.87" r="2.3" fill="#f9a21e"/><line x1="318.00" y1="44.60" x2="318.00" y2="37.00" stroke="#f9a21e" stroke-width="2.3" stroke-linecap="round"/><circle cx="318.00" cy="37.00" r="2.3" fill="#f9a21e"/><line x1="319.36" y1="45.14" x2="324.27" y2="39.87" stroke="#f9a21e" stroke-width="2.3" stroke-linecap="round"/><circle cx="324.27" cy="39.87" r="2.3" fill="#f9a21e"/><line x1="320.00" y1="46.46" x2="327.58" y2="45.93" stroke="#f9a21e" stroke-width="2.3" stroke-linecap="round"/><circle cx="327.58" cy="45.93" r="2.3" fill="#f9a21e"/><rect x="305.8" y="44.8" width="24.4" height="13.2" rx="3" fill="#000"/><text x="318" y="56.2" text-anchor="middle" font-family="Liberation Sans, sans-serif" font-weight="bold" font-size="11.8" fill="#fff" textLength="20.6" lengthAdjust="spacingAndGlyphs" style="will-change:transform">SVG</text><ellipse cx="374" cy="58.2" rx="12.5" ry="1.5" fill="#000" opacity="0.22"/><path d="M364.3 45V33.4Q364.3 32.3 365.4 32.3H382.8Q383.9 32.3 383.9 33.4V45Z" fill="#e9e9e9" stroke="#b4b4b4" stroke-width="0.7"/><rect x="376.5" y="34.6" width="5.2" height="8.4" fill="#d2d2d2" opacity="0.8"/><path d="M360.4 56V46.6Q360.4 43.6 363.4 43.6H384.8Q387.8 43.6 387.8 46.6V56Q387.8 57.3 386.5 57.3H361.7Q360.4 57.3 360.4 56Z" fill="url(#pr)" stroke="#a2a2a2" stroke-width="0.8"/><path d="M362.8 50.8Q362.8 49.6 364 49.6H384.2Q385.4 49.6 385.4 50.8" fill="none" stroke="#fff" stroke-width="0.9"/><path d="M362.4 47.6V50.8Q362.4 51.8 363.6 51.8H373" fill="none" stroke="#c4c4c4" stroke-width="0.7"/><circle cx="364.3" cy="49.3" r="0.6" fill="#666"/><path d="M374.6 46L381.8 51.4" stroke="#8e8e8e" stroke-width="3.6" stroke-linecap="round"/><path d="M374.6 46L381.8 51.4" stroke="#e6e6e6" stroke-width="2.2" stroke-linecap="round"/><circle cx="369.4" cy="40.7" r="6.9" fill="#f6f6f6" stroke="#c6c6c6" stroke-width="0.6"/><defs><linearGradient id="pl" x1="0" y1="0" x2="0" y2="1"><stop offset="0" stop-color="#e4eefa"/><stop offset="0.55" stop-color="#c2d6f0"/><stop offset="0.6" stop-color="#aecaea"/><stop offset="1" stop-color="#d4e4f6"/></linearGradient></defs><circle cx="369.4" cy="40.7" r="5.3" fill="url(#pl)" stroke="#5c8ed2" stroke-width="1.2"/><path d="M414.1 37.3L415.5 51.5L427.4 50.6L423.5 46.7C425.2 40.6 432.2 37.2 436.4 41.2C441.2 46 437.4 54.8 427.9 56.9C427.2 57.1 427.2 58.1 427.9 58.2C438.2 58.8 444.6 51.6 443.3 43.6C441.6 34 427.6 29.6 418.9 41.4Z" fill="url(#gr)" stroke="#1a7a2c" stroke-width="0.7" stroke-linejoin="round"/><g transform="translate(904.6,0) scale(-1,1)"><path d="M414.1 37.3L415.5 51.5L427.4 50.6L423.5 46.7C425.2 40.6 432.2 37.2 436.4 41.2C441.2 46 437.4 54.8 427.9 56.9C427.2 57.1 427.2 58.1 427.9 58.2C438.2 58.8 444.6 51.6 443.3 43.6C441.6 34 427.6 29.6 418.9 41.4Z" fill="url(#gr2)" stroke="#78b488" stroke-width="0.7" stroke-linejoin="round"/></g><ellipse cx="531" cy="57" rx="12" ry="1.5" fill="#000" opacity="0.1"/><g transform="translate(531.3,44.5) rotate(-47)"><rect x="-13.3" y="-3.8" width="26.6" height="7.6" rx="1.4" fill="url(#er)" stroke="#c87478" stroke-width="0.5"/><rect x="-13.3" y="-3.8" width="5" height="7.6" rx="0.8" fill="#f6f6f6" stroke="#bbb" stroke-width="0.5"/><rect x="-8.3" y="-0.9" width="21" height="2.2" fill="#f8eaea"/></g><path d="M588.3 31.2L590.6 30.6L589.2 46.8L586 47.8Z" fill="#f4f4f4" stroke="#9a9a9a" stroke-width="0.6"/><path d="M600.4 37L601 39.2L589.6 47L587.5 45.2Z" fill="#f4f4f4" stroke="#9a9a9a" stroke-width="0.6"/><ellipse cx="578.2" cy="48.6" rx="4.4" ry="2.5" transform="rotate(-18 578.2 48.6)" fill="none" stroke="#e07070" stroke-width="1.8"/><ellipse cx="589.4" cy="54.6" rx="2.6" ry="4.8" transform="rotate(-8 589.4 54.6)" fill="none" stroke="#e07070" stroke-width="1.8"/><path d="M582.4 47.2L587 46.6M588.6 49.8L588 46.6" stroke="#e07070" stroke-width="1.8"/><path d="M573.6 57.4H579.4M576.5 54.5V60.3" stroke="#222" stroke-width="0.9"/><path d="M618.8 30.6H638Q639.6 30.6 639.6 32.2V55H618.8Z" fill="#f2f2f2" stroke="#c4c4c4" stroke-width="0.6"/><path d="M622 36H632M622 38.5H632M622 41H628M622 43.5H628M622 46H628" stroke="#d8d8d8" stroke-width="0.7"/><path d="M627 36.4H646.4Q648 36.4 648 38V56.6L643.4 61.2H627Z" fill="#f6f6f6" stroke="#bdbdbd" stroke-width="0.7"/><path d="M648 56.6L643.4 61.2V56.6Z" fill="#dcdcdc" stroke="#bdbdbd" stroke-width="0.5"/><path d="M631 43H644M631 45.6H644M631 48.2H644M631 50.8H644M631 53.4H641" stroke="#d6d6d6" stroke-width="0.8"/><path d="M619.6 56.4H625.4M622.5 53.5V59.3" stroke="#222" stroke-width="0.9"/><rect x="665.8" y="33" width="26" height="27.2" rx="1.8" fill="#c88c34" stroke="#9a6418" stroke-width="0.9"/><rect x="668.8" y="35.4" width="20" height="22.6" fill="#f8f8f6" stroke="#d8d0c0" stroke-width="0.4"/><path d="M672 40.6H685.5M672 43.6H685.5M672 46.6H685.5M672 49.6H685.5M672 52.6H680.5" stroke="#cfcfcf" stroke-width="0.9"/><path d="M672.6 36.8V34Q672.6 32.6 674 32.6H675.4V31Q675.4 30.2 676.4 30.2H681.2Q682.2 30.2 682.2 31V32.6H683.6Q685 32.6 685 34V36.8Z" fill="#8e8e84" stroke="#66665e" stroke-width="0.5"/><path d="M683.4 58L688.8 52.6V58Z" fill="#a8a8a8"/><path d="M683.4 58L688.8 52.6H684.6Q683.4 52.6 683.4 53.8Z" fill="#e2e2e2" stroke="#bbb" stroke-width="0.3"/><g transform="translate(724.4,55.2) rotate(-41)"><path d="M0 0L5.6 -2.7V2.7Z" fill="#e8c490" stroke="#6a4418" stroke-width="0.6"/><path d="M0 0L2.3 -1.1V1.1Z" fill="#1a1a1a"/><rect x="5.6" y="-2.7" width="14.4" height="5.4" fill="url(#pc)" stroke="#8a1408" stroke-width="0.6"/><rect x="20" y="-2.7" width="1.8" height="5.4" fill="#d8d8d8" stroke="#888" stroke-width="0.4"/><path d="M21.8 -2.7H23.4Q25.4 -2.7 25.4 0Q25.4 2.7 23.4 2.7H21.8Z" fill="#e8281c" stroke="#8a1408" stroke-width="0.5"/></g><path d="M723 56.3H745" stroke="#f00000" stroke-width="1"/><rect x="765.6" y="35.8" width="28.6" height="21.2" fill="#000080" stroke="#202020" stroke-width="0.9"/><path d="M769 54L791 38.8V54H769" fill="none" stroke="#fff" stroke-width="1.3" stroke-dasharray="2.8 1.4"/><circle cx="826" cy="46" r="13.2" fill="none" stroke="#000" stroke-width="1.9"/><path d="M812 60L840 32" stroke="#1020f0" stroke-width="1.1"/><rect x="870.1" y="33.2" width="1.8" height="1.8" fill="#000"/><rect x="870.1" y="41.2" width="1.8" height="1.8" fill="#000"/><rect x="870.1" y="49.2" width="1.8" height="1.8" fill="#000"/><rect x="870.1" y="57.2" width="1.8" height="1.8" fill="#000"/><rect x="878.1" y="33.2" width="1.8" height="1.8" fill="#000"/><rect x="878.1" y="41.2" width="1.8" height="1.8" fill="#000"/><rect x="878.1" y="49.2" width="1.8" height="1.8" fill="#000"/><rect x="878.1" y="57.2" width="1.8" height="1.8" fill="#000"/><rect x="886.1" y="33.2" width="1.8" height="1.8" fill="#000"/><rect x="886.1" y="41.2" width="1.8" height="1.8" fill="#000"/><rect x="886.1" y="49.2" width="1.8" height="1.8" fill="#000"/><rect x="886.1" y="57.2" width="1.8" height="1.8" fill="#000"/><rect x="894.1" y="33.2" width="1.8" height="1.8" fill="#000"/><rect x="894.1" y="41.2" width="1.8" height="1.8" fill="#000"/><rect x="894.1" y="49.2" width="1.8" height="1.8" fill="#000"/><rect x="894.1" y="57.2" width="1.8" height="1.8" fill="#000"/><g><ellipse cx="939.8" cy="56.6" rx="11" ry="1.7" fill="#000" opacity="0.10"/><path d="M945.7 52.3L951.7 56.5" stroke="#64645e" stroke-width="4.7" stroke-linecap="round"/><path d="M946.3 51.4L952.3 55.6" stroke="#9a9a94" stroke-width="1.5" stroke-linecap="round"/><circle cx="936.3" cy="42" r="11.8" fill="#ecece6" stroke="#bdbdb2" stroke-width="0.8"/><circle cx="936.3" cy="42" r="9.6" fill="url(#lens)" stroke="#b4b8b0" stroke-width="0.6"/></g><path d="M930.3 42H942.3M936.3 36V48" stroke="#4a78c8" stroke-width="4.2"/><path d="M931.0 42H941.5999999999999M936.3 36.7V47.3" stroke="#fff" stroke-width="2.8"/><g><ellipse cx="985.9" cy="56.6" rx="11" ry="1.7" fill="#000" opacity="0.10"/><path d="M991.8 52.3L997.8 56.5" stroke="#64645e" stroke-width="4.7" stroke-linecap="round"/><path d="M992.4 51.4L998.4 55.6" stroke="#9a9a94" stroke-width="1.5" stroke-linecap="round"/><circle cx="982.4" cy="42" r="11.8" fill="#ecece6" stroke="#bdbdb2" stroke-width="0.8"/><circle cx="982.4" cy="42" r="9.6" fill="url(#lens)" stroke="#b4b8b0" stroke-width="0.6"/></g><path d="M976.0 42H988.8" stroke="#4a78c8" stroke-width="4.2"/><path d="M976.6999999999999 42H988.1" stroke="#fff" stroke-width="2.8"/><g><ellipse cx="1031.9" cy="56.6" rx="11" ry="1.7" fill="#000" opacity="0.10"/><path d="M1037.8 52.3L1043.8 56.5" stroke="#64645e" stroke-width="4.7" stroke-linecap="round"/><path d="M1038.4 51.4L1044.4 55.6" stroke="#9a9a94" stroke-width="1.5" stroke-linecap="round"/><circle cx="1028.4" cy="42" r="11.8" fill="#ecece6" stroke="#bdbdb2" stroke-width="0.8"/><circle cx="1028.4" cy="42" r="9.6" fill="url(#lens)" stroke="#b4b8b0" stroke-width="0.6"/></g><rect x="1025.0" y="38.6" width="6.8" height="6.8" fill="#b4ccf0" opacity="0.8"/><path d="M1022.8000000000001 39.8V36.4H1026.2M1022.8000000000001 44.2V47.6H1026.2M1034.0 39.8V36.4H1030.6000000000001M1034.0 44.2V47.6H1030.6000000000001" fill="none" stroke="#3a68c0" stroke-width="3.4"/><path d="M1022.8000000000001 39.8V36.4H1026.2M1022.8000000000001 44.2V47.6H1026.2M1034.0 39.8V36.4H1030.6000000000001M1034.0 44.2V47.6H1030.6000000000001" fill="none" stroke="#fff" stroke-width="2.2"/><g opacity="0.5"><ellipse cx="1077.9" cy="56.6" rx="11" ry="1.7" fill="#000" opacity="0.10"/><path d="M1083.8 52.3L1089.8 56.5" stroke="#64645e" stroke-width="4.7" stroke-linecap="round"/><path d="M1084.4 51.4L1090.4 55.6" stroke="#9a9a94" stroke-width="1.5" stroke-linecap="round"/><circle cx="1074.4" cy="42" r="11.8" fill="#ecece6" stroke="#bdbdb2" stroke-width="0.8"/><circle cx="1074.4" cy="42" r="9.6" fill="url(#lens)" stroke="#b4b8b0" stroke-width="0.6"/></g><rect x="1070.8000000000002" y="38.4" width="7.2" height="7.2" fill="#a8c0e8" opacity="0.8"/><path d="M1069.0 40.0V36.6H1072.4M1069.0 44.0V47.4H1072.4M1079.8000000000002 40.0V36.6H1076.4M1079.8000000000002 44.0V47.4H1076.4" fill="none" stroke="#ee6a6a" stroke-width="2"/><g><ellipse cx="1123.9" cy="56.6" rx="11" ry="1.7" fill="#000" opacity="0.10"/><path d="M1129.8 52.3L1135.8 56.5" stroke="#64645e" stroke-width="4.7" stroke-linecap="round"/><path d="M1130.4 51.4L1136.4 55.6" stroke="#9a9a94" stroke-width="1.5" stroke-linecap="round"/><circle cx="1120.4" cy="42" r="11.8" fill="#ecece6" stroke="#bdbdb2" stroke-width="0.8"/><circle cx="1120.4" cy="42" r="9.6" fill="url(#lens)" stroke="#b4b8b0" stroke-width="0.6"/></g><path d="M1113.2 42L1119.2 36.6V39.7H1127.0V44.3H1119.2V47.4Z" fill="#fff" stroke="#4a78c8" stroke-width="0.6"/><rect x="1154.4" y="30.6" width="27" height="17.4" rx="1.2" fill="#fff" stroke="#5c8ad8" stroke-width="1.1"/><g><ellipse cx="1172.1" cy="56.5" rx="11" ry="1.7" fill="#000" opacity="0.10"/><path d="M1176.3 53.0L1181.2 56.4" stroke="#64645e" stroke-width="3.8" stroke-linecap="round"/><path d="M1176.9 52.1L1181.8 55.5" stroke="#9a9a94" stroke-width="1.5" stroke-linecap="round"/><circle cx="1168.6" cy="44.6" r="10.1" fill="#ecece6" stroke="#bdbdb2" stroke-width="0.8"/><circle cx="1168.6" cy="44.6" r="7.9" fill="url(#lens)" stroke="#b4b8b0" stroke-width="0.6"/></g><g><ellipse cx="1216.5" cy="57.4" rx="11" ry="1.7" fill="#000" opacity="0.10"/><path d="M1222.4 53.1L1228.4 57.3" stroke="#64645e" stroke-width="4.7" stroke-linecap="round"/><path d="M1223.0 52.2L1229.0 56.4" stroke="#9a9a94" stroke-width="1.5" stroke-linecap="round"/><circle cx="1213" cy="42.8" r="11.8" fill="#ecece6" stroke="#bdbdb2" stroke-width="0.8"/><circle cx="1213" cy="42.8" r="9.6" fill="url(#lens)" stroke="#b4b8b0" stroke-width="0.6"/></g><path transform="rotate(0 1213 42.8)" d="M1211.8 40.8V34.4H1209.4L1213 29.599999999999998L1216.6 34.4H1214.2V40.8Z" fill="#fff" stroke="#4a7ee0" stroke-width="0.7"/><path transform="rotate(90 1213 42.8)" d="M1211.8 40.8V34.4H1209.4L1213 29.599999999999998L1216.6 34.4H1214.2V40.8Z" fill="#fff" stroke="#4a7ee0" stroke-width="0.7"/><path transform="rotate(180 1213 42.8)" d="M1211.8 40.8V34.4H1209.4L1213 29.599999999999998L1216.6 34.4H1214.2V40.8Z" fill="#fff" stroke="#4a7ee0" stroke-width="0.7"/><path transform="rotate(270 1213 42.8)" d="M1211.8 40.8V34.4H1209.4L1213 29.599999999999998L1216.6 34.4H1214.2V40.8Z" fill="#fff" stroke="#4a7ee0" stroke-width="0.7"/></svg>
<svg style="position:absolute;left:0px;top:0px;overflow:visible;" width="1500" height="844" viewBox="0 0 1500 844"><defs><linearGradient id="tbg" x1="0" y1="0" x2="0" y2="1"><stop offset="0" stop-color="#e9e9e9"/><stop offset="0.35" stop-color="#f4f4f4"/><stop offset="0.7" stop-color="#f2f2f2"/><stop offset="1" stop-color="#ebebeb"/></linearGradient></defs><rect x="7.20" y="116.2" width="1.7" height="1.7" fill="#b2b2b2"/><rect x="13.28" y="116.2" width="1.7" height="1.7" fill="#b2b2b2"/><rect x="19.36" y="116.2" width="1.7" height="1.7" fill="#b2b2b2"/><rect x="25.44" y="116.2" width="1.7" height="1.7" fill="#b2b2b2"/><rect x="31.52" y="116.2" width="1.7" height="1.7" fill="#b2b2b2"/><rect x="37.60" y="116.2" width="1.7" height="1.7" fill="#b2b2b2"/><rect x="43.68" y="116.2" width="1.7" height="1.7" fill="#b2b2b2"/><rect x="49.76" y="116.2" width="1.7" height="1.7" fill="#b2b2b2"/><rect x="55.84" y="116.2" width="1.7" height="1.7" fill="#b2b2b2"/><rect x="61.92" y="116.2" width="1.7" height="1.7" fill="#b2b2b2"/><g transform="translate(1.5,122.2)"><rect x="0.3" y="0.3" width="33.6" height="33.8" fill="url(#tbg)" stroke="#a9a9a9" stroke-width="1.1"/><path d="M29.3 25.3V29.6H25Z" fill="#000"/></g><path d="M8.2 131.4H14.600000000000001M11.4 128.20000000000002V134.6M22.400000000000002 140.4H28.8M25.6 137.20000000000002V143.6M9.2 146.4H15.600000000000001M12.4 143.20000000000002V149.6" stroke="#000" stroke-width="1.1" fill="none"/><g transform="translate(36.6,122.2)"><rect x="0.3" y="0.3" width="33.6" height="33.8" fill="url(#tbg)" stroke="#a9a9a9" stroke-width="1.1"/><path d="M29.3 25.3V29.6H25Z" fill="#000"/></g><path d="M41.5 144.7L65 134" stroke="#1c1c1c" stroke-width="0.98" fill="none"/><g transform="translate(1.5,157.3)"><rect x="0.3" y="0.3" width="33.6" height="33.8" fill="url(#tbg)" stroke="#a9a9a9" stroke-width="1.1"/><path d="M29.3 25.3V29.6H25Z" fill="#000"/></g><path d="M7.4 183.2A21.5 21.5 0 0 1 27.7 163.7" stroke="#1c1c1c" stroke-width="0.98" fill="none"/><g transform="translate(36.6,157.3)"><rect x="0.3" y="0.3" width="33.6" height="33.8" fill="url(#tbg)" stroke="#a9a9a9" stroke-width="1.1"/><path d="M29.3 25.3V29.6H25Z" fill="#000"/></g><circle cx="52.6" cy="173.4" r="9.8" stroke="#1c1c1c" stroke-width="0.98" fill="none"/><g transform="translate(1.5,192.5)"><rect x="0.3" y="0.3" width="33.6" height="33.8" fill="url(#tbg)" stroke="#a9a9a9" stroke-width="1.1"/><path d="M29.3 25.3V29.6H25Z" fill="#000"/></g><ellipse cx="18" cy="208.6" rx="14.2" ry="5.2" transform="rotate(-42 18 208.6)" stroke="#1c1c1c" stroke-width="0.98" fill="none"/><g transform="translate(36.6,192.5)"><rect x="0.3" y="0.3" width="33.6" height="33.8" fill="url(#tbg)" stroke="#a9a9a9" stroke-width="1.1"/><path d="M29.3 25.3V29.6H25Z" fill="#000"/></g><path d="M41.9 201C42.5 210 46 219.5 49.5 217.8C53.5 215.8 56.5 199.6 61 199.8C64.5 200 65.3 208.5 63.5 210.6C60.5 213.8 50 195.5 41.9 201Z" stroke="#1c1c1c" stroke-width="0.98" fill="none"/><g transform="translate(1.5,227.6)"><rect x="0.3" y="0.3" width="33.6" height="33.8" fill="url(#tbg)" stroke="#a9a9a9" stroke-width="1.1"/><path d="M29.3 25.3V29.6H25Z" fill="#000"/></g><path d="M13.6 239.2A4.4 4.4 0 0 0 13.6 247.9H27.6" stroke="#1c1c1c" stroke-width="0.98" fill="none"/><g transform="translate(36.6,227.6)"><rect x="0.3" y="0.3" width="33.6" height="33.8" fill="url(#tbg)" stroke="#a9a9a9" stroke-width="1.1"/><path d="M29.3 25.3V29.6H25Z" fill="#000"/></g><path d="M43.8 231.9L50.8 231.9L54.3 238L50.8 244.1L43.8 244.1L40.3 238Z M60.7 236.4L56.1 245.3H65.8Z M41.2 249.1H55.4V255.5H41.2Z" stroke="#1c1c1c" stroke-width="0.98" fill="none"/><g transform="translate(1.5,262.7)"><rect x="0.3" y="0.3" width="33.6" height="33.8" fill="url(#tbg)" stroke="#a9a9a9" stroke-width="1.1"/><path d="M29.3 25.3V29.6H25Z" fill="#000"/></g><clipPath id="hc"><path d="M7.4 286.8V279L12.8 273H28V286.8Z"/></clipPath><g clip-path="url(#hc)"><path d="M-6.6 286.8L7.2 273M-4.6 286.8L9.2 273M-2.6 286.8L11.2 273M-0.6 286.8L13.2 273M1.4 286.8L15.2 273M3.4 286.8L17.2 273M5.4 286.8L19.2 273M7.4 286.8L21.2 273M9.4 286.8L23.2 273M11.4 286.8L25.2 273M13.4 286.8L27.2 273M15.4 286.8L29.2 273M17.4 286.8L31.2 273M19.4 286.8L33.2 273M21.4 286.8L35.2 273M23.4 286.8L37.2 273M25.4 286.8L39.2 273M27.4 286.8L41.2 273M29.4 286.8L43.2 273M31.4 286.8L45.2 273" stroke="#3a3a3a" stroke-width="0.55" fill="none"/></g><path d="M7.4 286.8V279L12.8 273H28V286.8Z" stroke="#1c1c1c" stroke-width="0.98" fill="none"/><circle cx="20.6" cy="280" r="2.9" fill="#fff" stroke="#1c1c1c" stroke-width="1"/><g transform="translate(1.5,305.6)"><rect x="0.3" y="0.3" width="33.6" height="33.8" fill="url(#tbg)" stroke="#a9a9a9" stroke-width="1.1"/></g><g transform="translate(36.6,305.6)"><rect x="0.3" y="0.3" width="33.6" height="33.8" fill="url(#tbg)" stroke="#a9a9a9" stroke-width="1.1"/><path d="M29.3 25.3V29.6H25Z" fill="#000"/></g><path d="M43.3 313.8V329.7M62 313.8V329.7M44 316.4H61.3" stroke="#1c1c1c" stroke-width="0.98" fill="none"/><path d="M43.6 316.4L47.4 314.6V318.2ZM61.7 316.4L57.9 314.6V318.2Z" fill="#111"/><g transform="translate(1.5,340.6)"><rect x="0.3" y="0.3" width="33.6" height="33.8" fill="url(#tbg)" stroke="#a9a9a9" stroke-width="1.1"/></g><rect x="6.9" y="348.4" width="22.4" height="17" fill="#fff" stroke="#111" stroke-width="1.1"/><path d="M9.7 362.2V360.4L13.5 356.3L16.8 359.3L21.3 354.2L26.3 360.2V362.2Z" fill="#000"/><circle cx="24.4" cy="352.6" r="1.7" fill="#000"/><g transform="translate(1.5,383.7)"><rect x="0.3" y="0.3" width="33.6" height="33.8" fill="url(#tbg)" stroke="#a9a9a9" stroke-width="1.1"/><path d="M29.3 25.3V29.6H25Z" fill="#000"/></g><path d="M5.4 394V412.2H24.3Z" fill="#fff" stroke="#111" stroke-width="1.1"/><path d="M9.2 402.6V408.2H15Z" fill="#fff" stroke="#111" stroke-width="1"/><g transform="rotate(42 9.7 389)"><rect x="9.2" y="387.1" width="10.5" height="3.8" rx="0.8" fill="#e02818" stroke="#8a1408" stroke-width="0.5"/><path d="M19.7 387.1L23.2 389L19.7 390.9Z" fill="#e8c090" stroke="#8a6030" stroke-width="0.4"/><path d="M22.2 388.5L23.4 389L22.2 389.6Z" fill="#222"/><rect x="9.2" y="387.9" width="10.5" height="1" fill="#ff8070" opacity="0.7"/></g><path d="M26.3 387.3V391M26.3 391L23.6 404.8M26.3 391L29 404.8M25.3 393H27.3" stroke="#111" stroke-width="1" fill="none"/><circle cx="26.3" cy="390.3" r="1" fill="#111"/><g transform="translate(36.6,383.7)"><rect x="0.3" y="0.3" width="33.6" height="33.8" fill="url(#tbg)" stroke="#a9a9a9" stroke-width="1.1"/></g><rect x="41.3" y="396.2" width="23.6" height="7.4" rx="1.3" fill="#fafafa" stroke="#888" stroke-width="0.9"/><path d="M43.20 396.6V399.4M45.17 396.6V398.2M47.14 396.6V398.2M49.11 396.6V398.2M51.08 396.6V398.2M53.05 396.6V399.4M55.02 396.6V398.2M56.99 396.6V398.2M58.96 396.6V398.2M60.93 396.6V398.2M62.90 396.6V399.4" stroke="#444" stroke-width="0.7" fill="none"/><g transform="translate(1.5,418.8)"><rect x="0.3" y="0.3" width="33.6" height="33.8" fill="url(#tbg)" stroke="#a9a9a9" stroke-width="1.1"/></g><rect x="7.5" y="425.6" width="17" height="11.7" fill="#eeebd8" stroke="#9a9a9a" stroke-width="0.9"/><circle cx="22" cy="436.8" r="6.7" fill="#eeebd8" fill-opacity="0.85" stroke="#9a9a9a" stroke-width="0.9"/><circle cx="7.8" cy="438" r="1.3" fill="#f4a0a8"/><path d="M7.8 438H15" stroke="#f4b0b0" stroke-width="0.7"/><g transform="translate(36.6,418.8)"><rect x="0.3" y="0.3" width="33.6" height="33.8" fill="url(#tbg)" stroke="#a9a9a9" stroke-width="1.1"/><path d="M29.3 25.3V29.6H25Z" fill="#000"/></g><path d="M41.6 433.4L59 424" stroke="#f01818" stroke-width="1.2" fill="none"/><path d="M51.9 429.6V440.2L54.3 438L56.3 442.8L58.1 442L56.1 437.4H59.3Z" fill="#fff" stroke="#444" stroke-width="0.7"/><g transform="translate(1.5,461.4)"><rect x="0.3" y="0.3" width="33.6" height="33.8" fill="url(#tbg)" stroke="#a9a9a9" stroke-width="1.1"/><path d="M29.3 25.3V29.6H25Z" fill="#000"/></g><path d="M7.4 475.3L19.6 467.3L28.4 472.4L16.3 479.1ZM7.4 475.3V483.4L16.3 488L28.4 480.5V472.4M16.3 479.1V488" stroke="#1c1c1c" stroke-width="0.98" fill="none" stroke-linejoin="round"/></svg><span class="t" style="left:7.81px;top:305.00px;font-size:28.5px;line-height:35px;color:#000;font-family:'Liberation Serif',serif;-webkit-text-stroke:0;">A</span>
<div style="position:absolute;left:1156px;top:108px;width:297px;height:22px;background:linear-gradient(#ebebeb 0%,#e8e8e8 55%,#d8d8d8 100%)"></div><div style="position:absolute;left:1156px;top:129.6px;width:297px;height:1.2px;background:#c2c2c2"></div><div style="position:absolute;left:1156px;top:131px;width:297px;height:1px;background:#f2f2f2"></div><span class="t" style="left:1270.40px;top:111.00px;font-size:11.4px;line-height:16px;color:#1c1c1c;font-family:'Liberation Sans',sans-serif;letter-spacing:0.169px;">Tulajdon szerkesztő</span><svg style="position:absolute;left:1156.9px;top:111px;overflow:visible;" width="14" height="14" viewBox="0 0 14 14"><circle cx="7" cy="7" r="7" fill="#4e4e4e"/><path d="M4.3 4.3L9.7 9.7M9.7 4.3L4.3 9.7" stroke="#f2f2f2" stroke-width="1.9" stroke-linecap="round"/></svg><svg style="position:absolute;left:1175px;top:111px;overflow:visible;" width="14" height="14" viewBox="0 0 14 14"><circle cx="7" cy="7" r="7" fill="#4e4e4e"/><rect x="5.8" y="3.8" width="4.8" height="4.2" rx="0.9" fill="none" stroke="#f2f2f2" stroke-width="1.2"/><rect x="3.5" y="5.9" width="5" height="4.4" rx="0.9" fill="#4e4e4e" stroke="#f2f2f2" stroke-width="1.2"/></svg><span class="t" style="left:1168.70px;top:145.00px;font-size:13.2px;line-height:19px;color:#000;font-family:'Liberation Sans',sans-serif;letter-spacing:-0.057px;-webkit-text-stroke:0.4px #000;">Kiválasztás:</span><div style="position:absolute;left:1247.7px;top:143.9px;width:193.3px;height:20.3px;background:#fff;border-radius:5px;box-shadow:0 0 0 0.7px #c3cbd6,0 0.6px 1.2px rgba(0,0,0,0.16);"></div><span class="t" style="left:1251.50px;top:145.00px;font-size:13.2px;line-height:19px;color:#000;font-family:'Liberation Sans',sans-serif;letter-spacing:0.048px;">Nincs kiválasztás</span><svg style="position:absolute;left:1423px;top:146.7px;overflow:visible;" width="16" height="16" viewBox="0 0 16 16"><defs><linearGradient id="bb1423146" x1="0" y1="0" x2="0" y2="1"><stop offset="0" stop-color="#3f8ffb"/><stop offset="1" stop-color="#0a64f2"/></linearGradient></defs><rect x="0" y="0" width="16" height="16" rx="4" ry="4" fill="url(#bb1423146)"/><path d="M4.96 6.56L8.00 3.52L11.04 6.56M4.96 9.44L8.00 12.48L11.04 9.44" stroke="#fff" stroke-width="1.5" fill="none" stroke-linecap="round" stroke-linejoin="round"/></svg><span class="t" style="left:1175.30px;top:168.00px;font-size:11.2px;line-height:16px;color:#b4b4b4;font-family:'Liberation Sans',sans-serif;letter-spacing:0.322px;">Általános tulajdonságok</span><div style="position:absolute;left:1168px;top:183.5px;width:273.5px;height:185px;background:#e5e5e5;border:1px solid #dadada;border-radius:5px;box-sizing:border-box"></div><span class="t" style="left:1245.60px;top:197.00px;font-size:13.2px;line-height:19px;color:#a6a6a6;font-family:'Liberation Sans',sans-serif;letter-spacing:0.022px;">Réteg:</span><span class="t" style="left:1242.10px;top:223.00px;font-size:13.2px;line-height:19px;color:#a6a6a6;font-family:'Liberation Sans',sans-serif;letter-spacing:-0.254px;">Színes:</span><span class="t" style="left:1224.10px;top:247.00px;font-size:13.2px;line-height:19px;color:#a6a6a6;font-family:'Liberation Sans',sans-serif;letter-spacing:0.036px;">Vonalsúly:</span><span class="t" style="left:1229.10px;top:271.00px;font-size:13.2px;line-height:19px;color:#a6a6a6;font-family:'Liberation Sans',sans-serif;letter-spacing:0.241px;">Linetype:</span><span class="t" style="left:1185.40px;top:294.00px;font-size:13.2px;line-height:19px;color:#a6a6a6;font-family:'Liberation Sans',sans-serif;letter-spacing:-0.037px;">Vonaltípus skála:</span><span class="t" style="left:1177.60px;top:317.00px;font-size:13.2px;line-height:19px;color:#a6a6a6;font-family:'Liberation Sans',sans-serif;letter-spacing:0.036px;">Sorsolási sorrend:</span><span class="t" style="left:1225.90px;top:340.00px;font-size:13.2px;line-height:19px;color:#a6a6a6;font-family:'Liberation Sans',sans-serif;letter-spacing:-0.001px;">Fogantyú:</span><div style="position:absolute;left:1288px;top:196.2px;width:115.7px;height:19.6px;background:#fff;border-radius:5px;box-shadow:0 0 0 0.7px #c3cbd6,0 0.6px 1.2px rgba(0,0,0,0.16);"></div><svg style="position:absolute;left:1386.5px;top:198.7px;overflow:visible;" width="15.2" height="15.2" viewBox="0 0 15.2 15.2"><defs><linearGradient id="bb1386198" x1="0" y1="0" x2="0" y2="1"><stop offset="0" stop-color="#3f8ffb"/><stop offset="1" stop-color="#0a64f2"/></linearGradient></defs><rect x="0" y="0" width="15.2" height="15.2" rx="4" ry="4" fill="url(#bb1386198)"/><path d="M4.71 6.23L7.60 3.34L10.49 6.23M4.71 8.97L7.60 11.86L10.49 8.97" stroke="#fff" stroke-width="1.5" fill="none" stroke-linecap="round" stroke-linejoin="round"/></svg><div style="position:absolute;left:1407px;top:193px;width:26px;height:25.5px;background:#e8e8e8;border:1px solid #c6c6c6;box-sizing:border-box"></div><svg style="position:absolute;left:1413px;top:200px;overflow:visible;" width="14" height="12" viewBox="0 0 14 12"><path d="M0.5 1.5H13.5M0.5 6H13.5M0.5 10.5H13.5" stroke="#b0b0b0" stroke-width="1.5"/></svg><div style="position:absolute;left:1288px;top:222.6px;width:144px;height:20px;background:#fff;border-radius:5px;box-shadow:0 0 0 0.7px #c3cbd6,0 0.6px 1.2px rgba(0,0,0,0.16);"></div><div style="position:absolute;left:1291px;top:227.3px;width:16px;height:9.6px;background:#fff;border:1px solid #666;box-sizing:border-box"></div><span class="t" style="left:1313.00px;top:223.00px;font-size:13.2px;line-height:19px;color:#000;font-family:'Liberation Sans',sans-serif;letter-spacing:-0.036px;">Rétegenként</span><svg style="position:absolute;left:1414.3px;top:225px;overflow:visible;" width="15.4" height="15.4" viewBox="0 0 15.4 15.4"><defs><linearGradient id="bb1414225" x1="0" y1="0" x2="0" y2="1"><stop offset="0" stop-color="#3f8ffb"/><stop offset="1" stop-color="#0a64f2"/></linearGradient></defs><rect x="0" y="0" width="15.4" height="15.4" rx="4" ry="4" fill="url(#bb1414225)"/><path d="M4.77 6.31L7.70 3.39L10.63 6.31M4.77 9.09L7.70 12.01L10.63 9.09" stroke="#fff" stroke-width="1.5" fill="none" stroke-linecap="round" stroke-linejoin="round"/></svg><div style="position:absolute;left:1288px;top:246.4px;width:144px;height:20px;background:#fff;border-radius:5px;box-shadow:0 0 0 0.7px #c3cbd6,0 0.6px 1.2px rgba(0,0,0,0.16);"></div><div style="position:absolute;left:1291px;top:255.8px;width:16px;height:1px;background:#777"></div><span class="t" style="left:1313.00px;top:247.00px;font-size:13.2px;line-height:19px;color:#000;font-family:'Liberation Sans',sans-serif;letter-spacing:-0.036px;">Rétegenként</span><svg style="position:absolute;left:1414.3px;top:248.7px;overflow:visible;" width="15.4" height="15.4" viewBox="0 0 15.4 15.4"><defs><linearGradient id="bb1414248" x1="0" y1="0" x2="0" y2="1"><stop offset="0" stop-color="#3f8ffb"/><stop offset="1" stop-color="#0a64f2"/></linearGradient></defs><rect x="0" y="0" width="15.4" height="15.4" rx="4" ry="4" fill="url(#bb1414248)"/><path d="M4.77 6.31L7.70 3.39L10.63 6.31M4.77 9.09L7.70 12.01L10.63 9.09" stroke="#fff" stroke-width="1.5" fill="none" stroke-linecap="round" stroke-linejoin="round"/></svg><div style="position:absolute;left:1288px;top:270px;width:144px;height:20px;background:#fff;border-radius:5px;box-shadow:0 0 0 0.7px #c3cbd6,0 0.6px 1.2px rgba(0,0,0,0.16);"></div><span class="t" style="left:1291.00px;top:269.00px;font-size:13.2px;line-height:19px;color:#000;font-family:'Liberation Sans',sans-serif;letter-spacing:-0.036px;">Rétegenként</span><svg style="position:absolute;left:1414.3px;top:272.3px;overflow:visible;" width="15.4" height="15.4" viewBox="0 0 15.4 15.4"><defs><linearGradient id="bb1414272" x1="0" y1="0" x2="0" y2="1"><stop offset="0" stop-color="#3f8ffb"/><stop offset="1" stop-color="#0a64f2"/></linearGradient></defs><rect x="0" y="0" width="15.4" height="15.4" rx="4" ry="4" fill="url(#bb1414272)"/><path d="M4.77 6.31L7.70 3.39L10.63 6.31M4.77 9.09L7.70 12.01L10.63 9.09" stroke="#fff" stroke-width="1.5" fill="none" stroke-linecap="round" stroke-linejoin="round"/></svg><div style="position:absolute;left:1288px;top:294.4px;width:144px;height:19.0px;background:#fff;border-bottom:1px solid #c9c9c9;border-top:1px solid #e9e9e9;box-sizing:border-box"></div><div style="position:absolute;left:1288px;top:317.5px;width:144px;height:19.0px;background:#fff;border-bottom:1px solid #c9c9c9;border-top:1px solid #e9e9e9;box-sizing:border-box"></div><div style="position:absolute;left:1288px;top:340.5px;width:144px;height:18.69999999999999px;background:#fff;border-bottom:1px solid #c9c9c9;border-top:1px solid #e9e9e9;box-sizing:border-box"></div><div style="position:absolute;left:1135px;top:339px;width:20px;height:143px;background:#1b82f8;border-radius:4px 0 0 4px"></div><span class="t" style="left:1145px;top:410.5px;font-size:13.2px;line-height:16px;color:#fff;letter-spacing:0.089px;transform:translate(-50%,-50%) rotate(-90deg);">Tulajdon szerkesztő</span><div style="position:absolute;left:1135px;top:486.5px;width:20px;height:83px;background:#dcdcdc;border-radius:4px 0 0 4px"></div><span class="t" style="left:1145px;top:528px;font-size:13.2px;line-height:16px;color:#111;letter-spacing:0.145px;transform:translate(-50%,-50%) rotate(-90deg);">Réteglista</span><svg style="position:absolute;left:0px;top:0px;overflow:visible;" width="1500" height="844" viewBox="0 0 1500 844"><rect x="1462.5" y="116" width="1.6" height="1.6" fill="#a8a8a8"/><rect x="1468.5" y="116" width="1.6" height="1.6" fill="#a8a8a8"/><rect x="1474.5" y="116" width="1.6" height="1.6" fill="#a8a8a8"/><rect x="1480.5" y="116" width="1.6" height="1.6" fill="#a8a8a8"/><rect x="1486.5" y="116" width="1.6" height="1.6" fill="#a8a8a8"/><line x1="1458" y1="261.5" x2="1499" y2="261.5" stroke="#6a6a6a" stroke-width="1" stroke-dasharray="1 2"/><line x1="1458" y1="410.5" x2="1499" y2="410.5" stroke="#6a6a6a" stroke-width="1" stroke-dasharray="1 2"/></svg><div style="position:absolute;left:1456.3px;top:120px;width:50px;height:42.30000000000001px;background:#b9b9b9;border-radius:5px"></div><div style="position:absolute;left:1456.3px;top:269.5px;width:50px;height:42.0px;background:#b9b9b9;border-radius:5px"></div><div style="position:absolute;left:1456.3px;top:418.3px;width:50px;height:42.19999999999999px;background:#b9b9b9;border-radius:5px"></div><svg style="position:absolute;left:1463px;top:127px;overflow:visible;" width="28" height="28" viewBox="0 0 28 28"><rect x="0.5" y="0.5" width="27" height="27" fill="#fff" stroke="#222" stroke-width="1"/><rect x="0" y="0" width="28" height="5" fill="#000"/><rect x="1.2" y="1.2" width="3.2" height="3.2" fill="#fff"/><path d="M7.5 12.5L16 9.2V20L7.5 23.3Z" fill="#9a9a9a" stroke="#444" stroke-width="0.7"/><path d="M9 12.8L17.5 9.5V20.2L9 23.5Z" fill="#c8c8c8" stroke="#444" stroke-width="0.6"/><path d="M11 12.5L20 9V20.5L11 24Z" fill="#f4f4f4" stroke="#555" stroke-width="0.7"/><path d="M13.5 21L17.8 11.5L18 19.5M14.8 18H18" stroke="#e03030" stroke-width="0.9" fill="none"/></svg><svg style="position:absolute;left:1463px;top:174px;overflow:visible;" width="28" height="28" viewBox="0 0 28 28"><rect x="0.5" y="0.5" width="27" height="27" fill="#fff" stroke="#222" stroke-width="1"/><rect x="0" y="0" width="28" height="5" fill="#000"/><rect x="1.2" y="1.2" width="3.2" height="3.2" fill="#fff"/><rect x="7" y="10" width="10.5" height="7.5" fill="#f3e8b8" stroke="#555" stroke-width="0.9"/><circle cx="15.8" cy="17.2" r="4.7" fill="#f3e8b8" fill-opacity="0.9" stroke="#555" stroke-width="0.9"/></svg><svg style="position:absolute;left:1463px;top:220px;overflow:visible;" width="28" height="28" viewBox="0 0 28 28"><rect x="0.5" y="0.5" width="27" height="27" fill="#fff" stroke="#222" stroke-width="1"/><rect x="0" y="0" width="28" height="5" fill="#000"/><rect x="1.2" y="1.2" width="3.2" height="3.2" fill="#fff"/><rect x="5.5" y="10.5" width="16.5" height="10.5" rx="2.5" fill="#f2f2f2" stroke="#c4d0e4" stroke-width="1"/></svg><svg style="position:absolute;left:1463px;top:276px;overflow:visible;" width="28" height="28" viewBox="0 0 28 28"><rect x="0.5" y="0.5" width="27" height="27" fill="#fff" stroke="#222" stroke-width="1"/><rect x="0" y="0" width="28" height="5" fill="#000"/><rect x="1.2" y="1.2" width="3.2" height="3.2" fill="#fff"/><rect x="3" y="8.2" width="4.5" height="3.6" rx="0.8" fill="#000"/><rect x="10.5" y="8.5" width="13.5" height="3" fill="#fff" stroke="#222" stroke-width="0.8"/><rect x="3" y="14.2" width="4.5" height="3.6" rx="0.8" fill="#000"/><rect x="10.5" y="14.5" width="13.5" height="3" fill="#fff" stroke="#222" stroke-width="0.8"/><rect x="3" y="20.2" width="4.5" height="3.6" rx="0.8" fill="#000"/><rect x="10.5" y="20.5" width="13.5" height="3" fill="#fff" stroke="#222" stroke-width="0.8"/></svg><svg style="position:absolute;left:1463px;top:323px;overflow:visible;" width="28" height="28" viewBox="0 0 28 28"><rect x="0.5" y="0.5" width="27" height="27" fill="#fff" stroke="#222" stroke-width="1"/><rect x="0" y="0" width="28" height="5" fill="#000"/><rect x="1.2" y="1.2" width="3.2" height="3.2" fill="#fff"/><defs><linearGradient id="fn" x1="0" y1="0" x2="1" y2="0"><stop offset="0" stop-color="#bbb"/><stop offset="0.5" stop-color="#888"/><stop offset="1" stop-color="#666"/></linearGradient></defs><path d="M6.5 10.5Q14 8 21.5 10.5L15.6 17V23.2L13.2 21.8V17Z" fill="url(#fn)" stroke="#555" stroke-width="0.5"/><ellipse cx="14" cy="10.4" rx="7.4" ry="1.3" fill="#777"/></svg><svg style="position:absolute;left:1463px;top:369px;overflow:visible;" width="28" height="28" viewBox="0 0 28 28"><rect x="0.5" y="0.5" width="27" height="27" fill="#fff" stroke="#222" stroke-width="1"/><rect x="0" y="0" width="28" height="5" fill="#000"/><rect x="1.2" y="1.2" width="3.2" height="3.2" fill="#fff"/><path d="M6 9.5L9.8 12.8V19.2L6 22.5Z" fill="#fff" stroke="#333" stroke-width="0.8"/><rect x="9.8" y="12.6" width="5" height="6.8" fill="#e8e8e8" stroke="#444" stroke-width="0.7"/><rect x="14.8" y="12.6" width="6.7" height="6.8" rx="1" fill="#8a8a8a" stroke="#555" stroke-width="0.6"/><path d="M16.2 12.8V19.2M17.8 12.8V19.2M19.4 12.8V19.2" stroke="#b8b8b8" stroke-width="0.6"/><line x1="3.5" y1="16" x2="24" y2="16" stroke="#f08080" stroke-width="0.7" stroke-dasharray="3 1 1 1"/></svg><svg style="position:absolute;left:1463px;top:425px;overflow:visible;" width="28" height="28" viewBox="0 0 28 28"><rect x="0.5" y="0.5" width="27" height="27" fill="#fff" stroke="#222" stroke-width="1"/><rect x="0" y="0" width="28" height="5" fill="#000"/><rect x="1.2" y="1.2" width="3.2" height="3.2" fill="#fff"/><line x1="3" y1="9.0" x2="17" y2="9.0" stroke="#9c9c9c" stroke-width="1.1" stroke-dasharray="2.2 0.6 3 0.5 1.6 0.7"/><line x1="3" y1="12.4" x2="15.5" y2="12.4" stroke="#9c9c9c" stroke-width="1.1" stroke-dasharray="2.2 0.6 3 0.5 1.6 0.7"/><line x1="3" y1="15.8" x2="18.5" y2="15.8" stroke="#9c9c9c" stroke-width="1.1" stroke-dasharray="2.2 0.6 3 0.5 1.6 0.7"/><line x1="3" y1="19.2" x2="18" y2="19.2" stroke="#9c9c9c" stroke-width="1.1" stroke-dasharray="2.2 0.6 3 0.5 1.6 0.7"/><line x1="0.5" y1="22.5" x2="27.5" y2="22.5" stroke="#222" stroke-width="0.9"/><path d="M4.5 24L3 25.3L4.5 26.6" stroke="#222" stroke-width="0.7" fill="none"/><line x1="10" y1="25.3" x2="24.5" y2="25.3" stroke="#444" stroke-width="1.5" stroke-dasharray="1.4 0.5 2 0.4"/></svg><svg style="position:absolute;left:1463px;top:472px;overflow:visible;" width="28" height="28" viewBox="0 0 28 28"><rect x="0.5" y="0.5" width="27" height="27" fill="#fff" stroke="#222" stroke-width="1"/><rect x="0" y="0" width="28" height="5" fill="#000"/><rect x="1.2" y="1.2" width="3.2" height="3.2" fill="#fff"/><rect x="7.3" y="9.5" width="12.6" height="14" rx="1.2" fill="#c8913c" stroke="#8a5a18" stroke-width="0.7"/><rect x="8.8" y="11" width="9.6" height="11.3" fill="#f4f4f0"/><rect x="10.8" y="8.2" width="5.6" height="2.6" rx="0.8" fill="#8c8c84" stroke="#666" stroke-width="0.4"/><path d="M10 13.5H17M10 15.3H17M10 17.1H16M10 18.9H15" stroke="#c6c6c6" stroke-width="0.7"/><path d="M15.8 22.3L18.4 19.7V22.3Z" fill="#999"/></svg>
</div></body></html>
